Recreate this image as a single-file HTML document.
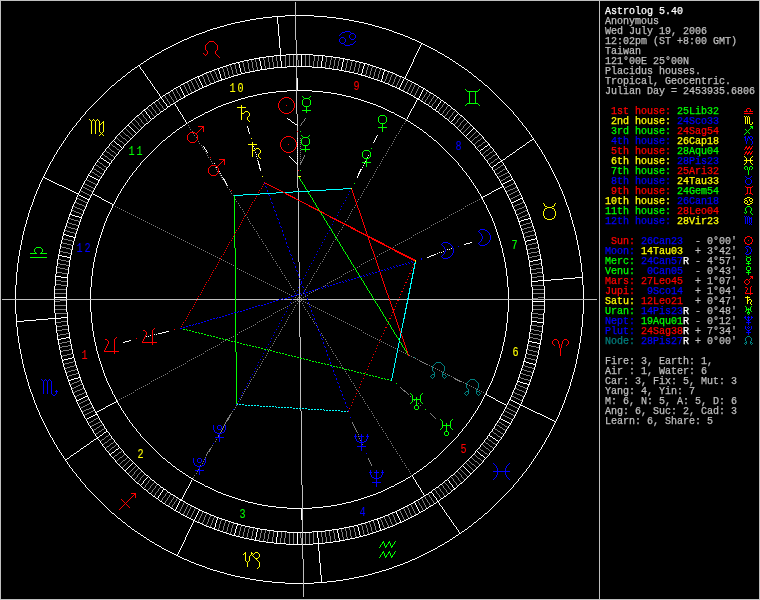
<!DOCTYPE html>
<html><head><meta charset="utf-8"><title>Astrolog 5.40 chart</title>
<style>
html,body{margin:0;padding:0;background:#000;overflow:hidden}
svg{display:block;will-change:transform}
.c-white{fill:#ffffff;stroke:#ffffff}
.c-lt{fill:#bfbfbf;stroke:#bfbfbf}
.c-gray{fill:#7f7f7f;stroke:#7f7f7f}
.c-red{fill:#ff0000;stroke:#ff0000}
.c-green{fill:#00ff00;stroke:#00ff00}
.c-yellow{fill:#ffff00;stroke:#ffff00}
.c-blue{fill:#0000ff;stroke:#0000ff}
.c-cyan{fill:#00ffff;stroke:#00ffff}
.c-dkcyan{fill:#007f7f;stroke:#007f7f}
.px path{fill:none;stroke-width:1;shape-rendering:crispEdges}
.sb text{font-family:"Liberation Mono",monospace;font-size:10px;white-space:pre;stroke-width:.25px}
.hn text{font-family:"Liberation Mono",monospace;font-size:13px;text-anchor:middle;letter-spacing:2.46px;stroke-width:.1px}
</style></head><body>
<svg width="760" height="600" viewBox="0 0 760 600">
<rect width="760" height="600" fill="#000"/>
<g class="px">
<path stroke="#ffffff" d="M285 15.5h10M296 15.5h18M272 16.5h13M314 16.5h13M263 17.5h9M327 17.5h9M256 18.5h7M336 18.5h7M250 19.5h6M343 19.5h6M245 20.5h5M349 20.5h5M240 21.5h5M354 21.5h5M235 22.5h5M359 22.5h5M231 23.5h4M364 23.5h4M227 24.5h4M368 24.5h4M224 25.5h3M372 25.5h3M220 26.5h4M375 26.5h4M217 27.5h3M379 27.5h3M213 28.5h4M382 28.5h4M210 29.5h3M386 29.5h3M207 30.5h3M389 30.5h3M205 31.5h2M392 31.5h2M202 32.5h3M394 32.5h3M199 33.5h3M397 33.5h3M196 34.5h3M400 34.5h3M194 35.5h2M403 35.5h2M191 36.5h3M405 36.5h3M189 37.5h2M408 37.5h2M187 38.5h2M410 38.5h2M184 39.5h3M412 39.5h3M182 40.5h2M415 40.5h2M180 41.5h2M417 41.5h2M178 42.5h2M419 42.5h2M176 43.5h2M421 43.5h2M174 44.5h2M423 44.5h2M172 45.5h2M425 45.5h2M170 46.5h2M427 46.5h2M168 47.5h2M429 47.5h2M166 48.5h2M431 48.5h2M164 49.5h2M433 49.5h2M162 50.5h2M435 50.5h2M159 52.5h2M438 52.5h2M157 53.5h2M440 53.5h2M155 54.5h2M286 54.5h10M297 54.5h16M442 54.5h2M274 55.5h12M313 55.5h12M152 56.5h2M266 56.5h8M325 56.5h8M445 56.5h2M150 57.5h2M259 57.5h7M333 57.5h7M447 57.5h2M254 58.5h6M340 58.5h5M147 59.5h2M249 59.5h5M345 59.5h5M450 59.5h2M244 60.5h5M350 60.5h5M144 61.5h2M240 61.5h4M355 61.5h4M453 61.5h2M236 62.5h4M359 62.5h4M141 63.5h2M232 63.5h4M363 63.5h4M456 63.5h2M229 64.5h3M367 64.5h3M138 65.5h2M226 65.5h3M370 65.5h3M459 65.5h2M223 66.5h3M287 66.5h9M297 66.5h15M373 66.5h3M135 67.5h2M220 67.5h3M274 67.5h13M312 67.5h13M376 67.5h3M462 67.5h2M217 68.5h3M267 68.5h7M325 68.5h7M379 68.5h3M132 69.5h2M214 69.5h3M260 69.5h7M332 69.5h7M382 69.5h3M465 69.5h2M212 70.5h2M255 70.5h5M339 70.5h5M384 70.5h3M209 71.5h3M250 71.5h5M344 71.5h5M387 71.5h3M128 72.5h2M206 72.5h3M245 72.5h5M349 72.5h5M390 72.5h3M469 72.5h2M204 73.5h2M241 73.5h4M354 73.5h4M393 73.5h2M202 74.5h2M238 74.5h3M358 74.5h4M395 74.5h2M200 75.5h2M234 75.5h4M361 75.5h4M397 75.5h2M123 76.5h2M197 76.5h3M231 76.5h3M365 76.5h3M399 76.5h3M474 76.5h2M195 77.5h2M228 77.5h3M368 77.5h3M402 77.5h2M193 78.5h2M225 78.5h3M371 78.5h3M404 78.5h2M191 79.5h2M221 79.5h4M374 79.5h3M406 79.5h2M118 80.5h2M189 80.5h2M219 80.5h3M377 80.5h3M408 80.5h2M479 80.5h2M187 81.5h2M216 81.5h3M380 81.5h3M410 81.5h2M185 82.5h2M214 82.5h2M383 82.5h2M412 82.5h2M183 83.5h2M211 83.5h3M385 83.5h3M414 83.5h2M181 84.5h2M209 84.5h2M388 84.5h2M416 84.5h2M112 85.5h2M207 85.5h2M390 85.5h2M485 85.5h2M178 86.5h2M204 86.5h3M392 86.5h3M419 86.5h2M176 87.5h2M202 87.5h2M395 87.5h2M421 87.5h2M174 88.5h2M200 88.5h2M397 88.5h3M423 88.5h2M198 89.5h2M399 89.5h2M171 90.5h2M196 90.5h2M287 90.5h9M297 90.5h15M401 90.5h2M426 90.5h2M194 91.5h2M276 91.5h11M312 91.5h11M403 91.5h2M168 92.5h2M192 92.5h2M268 92.5h8M323 92.5h8M405 92.5h2M429 92.5h2M166 93.5h2M190 93.5h2M262 93.5h6M331 93.5h6M407 93.5h2M431 93.5h2M188 94.5h2M257 94.5h5M337 94.5h5M409 94.5h2M163 95.5h2M186 95.5h2M253 95.5h4M342 95.5h4M411 95.5h2M434 95.5h2M184 96.5h2M248 96.5h5M346 96.5h5M160 97.5h2M183 97.5h2M245 97.5h3M351 97.5h3M414 97.5h2M437 97.5h2M181 98.5h2M241 98.5h4M354 98.5h4M416 98.5h3M179 99.5h2M238 99.5h3M358 99.5h3M417 99.5h3M156 100.5h2M235 100.5h3M361 100.5h3M441 100.5h2M176 101.5h2M232 101.5h3M364 101.5h3M421 101.5h2M153 102.5h2M229 102.5h3M367 102.5h3M444 102.5h2M173 103.5h2M226 103.5h3M370 103.5h3M424 103.5h2M171 104.5h2M223 104.5h3M373 104.5h3M426 104.5h2M149 105.5h2M221 105.5h2M376 105.5h2M448 105.5h2M167 106.5h3M218 106.5h3M378 106.5h3M429 106.5h2M216 107.5h2M381 107.5h2M214 108.5h2M383 108.5h2M144 109.5h2M164 109.5h2M212 109.5h2M385 109.5h2M433 109.5h3M453 109.5h2M143 110.5h2M210 110.5h2M387 110.5h2M161 111.5h2M208 111.5h2M389 111.5h2M436 111.5h2M205 112.5h3M391 112.5h3M157 114.5h2M202 114.5h2M395 114.5h2M440 114.5h2M137 115.5h2M200 115.5h2M397 115.5h2M460 115.5h2M198 116.5h2M399 116.5h2M196 117.5h2M401 117.5h2M152 118.5h2M194 118.5h2M403 118.5h2M445 118.5h2M288 119.5h2M191 120.5h2M406 120.5h2M189 121.5h2M408 121.5h2M292 122.5h2M146 123.5h2M411 123.5h2M451 123.5h2M295 124.5h2M127 125.5h2M183 125.5h2M414 125.5h2M180 127.5h2M417 127.5h2M473 128.5h2M177 129.5h2M420 129.5h2M173 132.5h2M424 132.5h2M168 136.5h2M429 136.5h2M532 139.5h2M163 140.5h2M434 140.5h2M530 140.5h2M527 142.5h2M117 144.5h2M488 144.5h2M523 145.5h2M485 146.5h2M520 147.5h2M481 149.5h2M517 149.5h2M513 152.5h2M510 154.5h2M507 156.5h2M101 158.5h2M503 159.5h2M104 160.5h2M501 160.5h2M500 161.5h2M107 162.5h2M498 162.5h2M109 163.5h2M258 164.5h2M494 165.5h2M491 167.5h2M259 168.5h2M360 169.5h2M359 171.5h2M358 173.5h2M88 175.5h2M90 176.5h2M43 177.5h2M92 177.5h2M45 178.5h2M94 178.5h2M47 179.5h2M96 179.5h2M223 179.5h2M511 179.5h2M49 180.5h2M98 180.5h2M509 180.5h2M51 181.5h2M507 181.5h2M53 182.5h2M505 182.5h2M55 183.5h2M503 183.5h2M57 184.5h2M501 184.5h2M59 185.5h3M62 186.5h2M502 186.5h2M64 187.5h2M500 187.5h2M66 188.5h2M498 188.5h2M68 189.5h2M496 189.5h2M70 190.5h2M494 190.5h2M72 191.5h2M492 191.5h2M74 192.5h2M76 193.5h3M489 193.5h2M93 194.5h2M487 194.5h2M79 195.5h2M95 195.5h2M485 195.5h2M81 196.5h2M97 196.5h2M483 196.5h2M83 197.5h2M99 197.5h2M481 197.5h2M85 198.5h2M520 198.5h3M87 199.5h3M102 199.5h2M518 199.5h2M104 200.5h2M516 200.5h2M106 201.5h2M514 201.5h2M108 202.5h2M511 202.5h3M110 203.5h2M112 204.5h2M69 214.5h3M72 215.5h3M75 216.5h4M79 217.5h3M528 218.5h3M524 219.5h4M521 220.5h3M518 221.5h3M63 234.5h3M66 235.5h3M69 236.5h4M73 237.5h3M535 238.5h2M531 239.5h4M527 240.5h4M525 241.5h2M470 242.5h2M466 243.5h4M464 244.5h2M434 254.5h2M58 255.5h4M431 255.5h3M62 256.5h5M429 256.5h2M67 257.5h4M427 257.5h2M538 259.5h4M533 260.5h5M529 261.5h4M55 276.5h6M61 277.5h7M575 277.5h8M563 278.5h12M551 279.5h12M538 280.5h13M531 281.5h7M54 297.5h13M532 301.5h13M61 317.5h7M48 318.5h13M36 319.5h12M24 320.5h12M16 321.5h8M531 321.5h6M537 322.5h7M166 331.5h3M162 332.5h4M158 333.5h4M66 337.5h4M61 338.5h5M57 339.5h4M129 340.5h2M125 341.5h4M528 341.5h4M123 342.5h2M532 342.5h5M537 343.5h4M72 357.5h2M68 358.5h4M64 359.5h4M62 360.5h2M523 361.5h3M526 362.5h3M529 363.5h4M533 364.5h3M78 377.5h3M74 378.5h4M71 379.5h3M68 380.5h3M517 381.5h3M520 382.5h3M523 383.5h4M527 384.5h3M485 394.5h2M487 395.5h2M85 396.5h3M489 396.5h2M83 397.5h2M491 397.5h2M81 398.5h2M493 398.5h2M79 399.5h2M509 399.5h2M76 400.5h3M496 400.5h2M511 400.5h2M116 401.5h2M498 401.5h2M513 401.5h2M114 402.5h2M500 402.5h2M515 402.5h2M112 403.5h2M502 403.5h2M517 403.5h2M110 404.5h2M504 404.5h2M519 404.5h2M108 405.5h2M520 405.5h3M106 406.5h2M523 406.5h2M525 407.5h2M103 408.5h2M527 408.5h2M101 409.5h2M529 409.5h2M99 410.5h2M531 410.5h2M97 411.5h2M533 411.5h2M95 412.5h2M535 412.5h2M537 413.5h3M95 414.5h3M540 414.5h2M93 415.5h2M542 415.5h2M91 416.5h2M544 416.5h2M89 417.5h2M546 417.5h2M87 418.5h2M499 418.5h2M548 418.5h2M501 419.5h2M550 419.5h2M503 420.5h2M552 420.5h2M505 421.5h2M554 421.5h2M507 422.5h2M509 423.5h2M106 431.5h2M104 432.5h2M100 435.5h2M488 435.5h2M490 436.5h2M97 437.5h2M96 438.5h2M493 438.5h2M94 439.5h2M496 440.5h2M91 441.5h2M87 444.5h2M84 446.5h2M81 448.5h2M116 449.5h2M77 451.5h2M112 452.5h2M74 453.5h2M109 454.5h2M71 455.5h2M481 455.5h2M67 458.5h2M163 458.5h2M434 458.5h2M65 459.5h2M168 462.5h2M429 462.5h2M173 466.5h2M424 466.5h2M177 469.5h2M420 469.5h2M124 470.5h2M180 471.5h2M417 471.5h2M183 473.5h2M414 473.5h2M470 473.5h2M146 475.5h2M186 475.5h2M451 475.5h2M189 477.5h2M408 477.5h2M191 478.5h2M406 478.5h2M152 480.5h2M194 480.5h2M403 480.5h2M445 480.5h2M196 481.5h2M401 481.5h2M198 482.5h2M399 482.5h2M137 483.5h2M200 483.5h2M397 483.5h2M460 483.5h2M157 484.5h2M202 484.5h2M395 484.5h2M440 484.5h2M205 486.5h3M391 486.5h3M161 487.5h2M208 487.5h2M389 487.5h2M436 487.5h2M210 488.5h2M387 488.5h2M454 488.5h2M144 489.5h2M163 489.5h3M212 489.5h2M385 489.5h2M433 489.5h2M453 489.5h2M214 490.5h2M383 490.5h2M216 491.5h2M381 491.5h2M168 492.5h2M218 492.5h3M378 492.5h3M429 492.5h3M149 493.5h2M221 493.5h2M376 493.5h2M448 493.5h2M171 494.5h2M223 494.5h3M373 494.5h3M426 494.5h2M173 495.5h2M226 495.5h3M370 495.5h3M424 495.5h2M153 496.5h2M229 496.5h3M367 496.5h3M444 496.5h2M176 497.5h2M232 497.5h3M364 497.5h3M421 497.5h2M156 498.5h2M235 498.5h3M361 498.5h3M441 498.5h2M179 499.5h3M238 499.5h3M358 499.5h3M418 499.5h2M180 500.5h3M241 500.5h4M354 500.5h4M416 500.5h2M160 501.5h2M183 501.5h2M245 501.5h3M351 501.5h3M414 501.5h2M437 501.5h2M248 502.5h5M346 502.5h5M413 502.5h2M163 503.5h2M186 503.5h2M253 503.5h4M342 503.5h4M411 503.5h2M434 503.5h2M188 504.5h2M257 504.5h5M337 504.5h5M409 504.5h2M166 505.5h2M190 505.5h2M262 505.5h6M331 505.5h6M407 505.5h2M431 505.5h2M168 506.5h2M192 506.5h2M268 506.5h8M323 506.5h8M405 506.5h2M429 506.5h2M194 507.5h2M276 507.5h11M312 507.5h11M403 507.5h2M171 508.5h2M196 508.5h2M287 508.5h15M303 508.5h9M401 508.5h2M426 508.5h2M198 509.5h2M399 509.5h2M174 510.5h2M199 510.5h3M397 510.5h2M423 510.5h2M176 511.5h2M202 511.5h2M395 511.5h2M421 511.5h2M178 512.5h2M204 512.5h3M392 512.5h3M419 512.5h2M112 513.5h2M207 513.5h2M390 513.5h2M485 513.5h2M181 514.5h2M209 514.5h2M388 514.5h2M416 514.5h2M183 515.5h2M211 515.5h3M385 515.5h3M414 515.5h2M185 516.5h2M214 516.5h2M383 516.5h2M412 516.5h2M187 517.5h2M216 517.5h3M380 517.5h3M410 517.5h2M118 518.5h2M189 518.5h2M219 518.5h3M377 518.5h3M408 518.5h2M479 518.5h2M191 519.5h2M222 519.5h3M374 519.5h4M406 519.5h2M193 520.5h2M225 520.5h3M371 520.5h3M404 520.5h2M195 521.5h2M228 521.5h3M368 521.5h3M402 521.5h2M123 522.5h2M197 522.5h3M231 522.5h3M365 522.5h3M399 522.5h3M474 522.5h2M200 523.5h2M234 523.5h4M361 523.5h4M397 523.5h2M202 524.5h2M237 524.5h4M358 524.5h3M395 524.5h2M204 525.5h2M241 525.5h4M354 525.5h4M393 525.5h2M128 526.5h2M206 526.5h3M245 526.5h5M349 526.5h5M390 526.5h3M469 526.5h2M209 527.5h3M250 527.5h5M344 527.5h5M387 527.5h3M212 528.5h3M255 528.5h5M339 528.5h5M385 528.5h2M132 529.5h2M214 529.5h3M260 529.5h7M332 529.5h7M382 529.5h3M465 529.5h2M217 530.5h3M267 530.5h7M325 530.5h7M379 530.5h3M135 531.5h2M220 531.5h3M274 531.5h13M312 531.5h13M376 531.5h3M462 531.5h2M223 532.5h3M287 532.5h15M303 532.5h9M373 532.5h3M138 533.5h2M226 533.5h3M370 533.5h3M459 533.5h2M229 534.5h3M367 534.5h3M141 535.5h2M232 535.5h4M363 535.5h4M456 535.5h2M236 536.5h4M359 536.5h4M144 537.5h2M240 537.5h4M355 537.5h4M453 537.5h2M244 538.5h5M350 538.5h5M147 539.5h2M249 539.5h5M345 539.5h5M450 539.5h2M254 540.5h5M339 540.5h6M150 541.5h2M259 541.5h7M333 541.5h7M447 541.5h2M152 542.5h2M266 542.5h8M325 542.5h8M445 542.5h2M274 543.5h12M313 543.5h12M155 544.5h2M286 544.5h16M303 544.5h10M442 544.5h2M157 545.5h2M440 545.5h2M159 546.5h2M438 546.5h2M162 548.5h2M435 548.5h2M164 549.5h2M433 549.5h2M166 550.5h2M431 550.5h2M168 551.5h2M429 551.5h2M170 552.5h2M427 552.5h2M172 553.5h2M425 553.5h2M174 554.5h2M423 554.5h2M176 555.5h2M421 555.5h2M178 556.5h2M419 556.5h2M180 557.5h2M417 557.5h2M182 558.5h2M415 558.5h2M184 559.5h3M412 559.5h3M187 560.5h2M410 560.5h2M189 561.5h2M408 561.5h2M191 562.5h3M405 562.5h3M194 563.5h2M403 563.5h2M196 564.5h3M400 564.5h3M199 565.5h3M397 565.5h3M202 566.5h3M394 566.5h3M205 567.5h2M392 567.5h2M207 568.5h3M389 568.5h3M210 569.5h3M386 569.5h3M213 570.5h4M382 570.5h4M217 571.5h3M379 571.5h3M220 572.5h4M375 572.5h4M224 573.5h3M372 573.5h3M227 574.5h4M368 574.5h4M231 575.5h4M364 575.5h4M235 576.5h5M359 576.5h5M240 577.5h5M354 577.5h5M245 578.5h5M349 578.5h5M250 579.5h6M343 579.5h6M256 580.5h7M336 580.5h7M263 581.5h9M327 581.5h9M272 582.5h13M314 582.5h13M285 583.5h18M304 583.5h10M15.5 285v14M15.5 300v14M16.5 272v13M16.5 314v7M16.5 322v5M17.5 263v9M17.5 327v9M18.5 256v7M18.5 336v7M19.5 250v6M19.5 343v6M20.5 245v5M20.5 349v5M21.5 240v5M21.5 354v5M22.5 235v5M22.5 359v5M23.5 231v4M23.5 364v4M24.5 227v4M24.5 368v4M25.5 224v3M25.5 372v3M26.5 220v4M26.5 375v4M27.5 217v3M27.5 379v3M28.5 213v4M28.5 382v4M29.5 210v3M29.5 386v3M30.5 207v3M30.5 389v3M31.5 205v2M31.5 392v2M32.5 202v3M32.5 394v3M33.5 199v3M33.5 397v3M34.5 196v3M34.5 400v3M35.5 194v2M35.5 403v2M36.5 191v3M36.5 405v3M37.5 189v2M37.5 408v2M38.5 187v2M38.5 410v2M39.5 184v3M39.5 412v3M40.5 182v2M40.5 415v2M41.5 180v2M41.5 417v2M42.5 178v2M42.5 419v2M43.5 176v1M43.5 421v2M44.5 174v2M44.5 423v2M45.5 172v2M45.5 425v2M46.5 170v2M46.5 427v2M47.5 168v2M47.5 429v2M48.5 166v2M48.5 431v2M49.5 164v2M49.5 433v2M50.5 162v2M50.5 435v2M51.5 161v1M51.5 437v1M52.5 159v2M52.5 438v2M53.5 157v2M53.5 440v2M54.5 155v2M54.5 286v11M54.5 298v1M54.5 300v13M54.5 442v2M55.5 154v1M55.5 274v2M55.5 277v9M55.5 313v5M55.5 319v6M55.5 444v1M56.5 152v2M56.5 266v8M56.5 325v8M56.5 445v2M57.5 150v2M57.5 259v7M57.5 333v6M57.5 447v2M58.5 149v1M58.5 254v1M58.5 256v3M58.5 340v5M58.5 449v1M59.5 147v2M59.5 249v5M59.5 345v5M59.5 450v2M60.5 146v1M60.5 244v5M60.5 350v5M60.5 452v1M61.5 144v2M61.5 240v4M61.5 355v4M61.5 453v2M62.5 143v1M62.5 236v4M62.5 359v1M62.5 361v2M62.5 455v1M63.5 141v2M63.5 232v2M63.5 235v1M63.5 363v4M63.5 456v2M64.5 140v1M64.5 229v3M64.5 367v3M64.5 458v1M65.5 138v2M65.5 226v3M65.5 370v3M65.5 460v1M66.5 137v1M66.5 223v3M66.5 287v10M66.5 298v1M66.5 300v12M66.5 373v3M66.5 461v1M67.5 135v2M67.5 220v3M67.5 274v3M67.5 278v9M67.5 312v5M67.5 318v7M67.5 376v3M67.5 462v2M68.5 134v1M68.5 217v3M68.5 267v7M68.5 325v7M68.5 379v1M68.5 381v1M68.5 464v1M69.5 132v2M69.5 215v2M69.5 260v7M69.5 332v5M69.5 338v1M69.5 382v3M69.5 457v1M69.5 465v2M70.5 131v1M70.5 212v2M70.5 255v2M70.5 258v2M70.5 339v5M70.5 385v2M70.5 456v1M70.5 467v1M71.5 130v1M71.5 209v3M71.5 250v5M71.5 344v5M71.5 387v3M71.5 468v1M72.5 128v2M72.5 206v3M72.5 245v5M72.5 349v5M72.5 390v3M72.5 469v2M73.5 127v1M73.5 204v2M73.5 241v4M73.5 354v3M73.5 393v2M73.5 454v1M73.5 471v1M74.5 126v1M74.5 202v2M74.5 238v3M74.5 358v3M74.5 395v2M74.5 472v1M75.5 125v1M75.5 200v2M75.5 234v3M75.5 361v4M75.5 397v2M75.5 473v1M76.5 123v2M76.5 197v3M76.5 231v3M76.5 365v3M76.5 399v1M76.5 401v1M76.5 452v1M76.5 474v2M77.5 122v1M77.5 195v2M77.5 228v3M77.5 368v3M77.5 402v2M77.5 476v1M78.5 121v1M78.5 194v1M78.5 225v3M78.5 371v3M78.5 404v2M78.5 477v1M79.5 120v1M79.5 191v2M79.5 222v3M79.5 374v3M79.5 406v2M79.5 450v1M79.5 478v1M80.5 118v2M80.5 189v2M80.5 219v3M80.5 378v2M80.5 408v2M80.5 449v1M80.5 479v2M81.5 117v1M81.5 187v2M81.5 216v1M81.5 218v1M81.5 380v3M81.5 410v2M81.5 481v1M82.5 116v1M82.5 185v2M82.5 214v2M82.5 383v2M82.5 412v2M82.5 482v1M83.5 115v1M83.5 183v2M83.5 211v3M83.5 385v3M83.5 414v2M83.5 447v1M83.5 483v1M84.5 114v1M84.5 181v2M84.5 209v2M84.5 388v2M84.5 416v2M84.5 484v1M85.5 112v2M85.5 180v1M85.5 207v2M85.5 390v2M85.5 418v1M85.5 485v2M86.5 111v1M86.5 178v2M86.5 204v3M86.5 392v3M86.5 419v2M86.5 445v1M86.5 487v1M87.5 110v1M87.5 176v2M87.5 202v2M87.5 395v1M87.5 421v2M87.5 488v1M88.5 109v1M88.5 174v1M88.5 200v2M88.5 397v2M88.5 423v2M88.5 489v1M89.5 108v1M89.5 173v1M89.5 198v1M89.5 399v2M89.5 425v1M89.5 443v1M89.5 490v1M90.5 107v1M90.5 171v2M90.5 196v2M90.5 287v12M90.5 300v12M90.5 401v2M90.5 426v2M90.5 442v1M90.5 491v1M91.5 106v1M91.5 170v1M91.5 194v2M91.5 276v11M91.5 312v11M91.5 403v2M91.5 428v1M91.5 492v1M92.5 105v1M92.5 168v2M92.5 192v2M92.5 268v8M92.5 323v8M92.5 405v2M92.5 429v2M92.5 493v1M93.5 104v1M93.5 166v2M93.5 190v2M93.5 262v6M93.5 331v6M93.5 407v2M93.5 431v2M93.5 440v1M93.5 494v1M94.5 103v1M94.5 165v1M94.5 188v2M94.5 257v5M94.5 337v5M94.5 409v2M94.5 433v1M94.5 495v1M95.5 102v1M95.5 163v2M95.5 186v2M95.5 253v4M95.5 342v4M95.5 411v1M95.5 434v2M95.5 496v1M96.5 101v1M96.5 162v1M96.5 185v1M96.5 248v5M96.5 346v5M96.5 413v1M96.5 436v1M96.5 497v1M97.5 100v1M97.5 160v2M97.5 183v2M97.5 245v3M97.5 351v3M97.5 415v1M97.5 498v1M98.5 99v1M98.5 159v1M98.5 181v2M98.5 241v4M98.5 354v4M98.5 416v2M98.5 439v1M98.5 499v1M99.5 98v1M99.5 158v1M99.5 179v1M99.5 238v3M99.5 358v3M99.5 418v2M99.5 436v1M99.5 440v1M99.5 500v1M100.5 97v1M100.5 156v2M100.5 178v1M100.5 235v3M100.5 361v3M100.5 420v1M100.5 441v2M100.5 501v1M101.5 96v1M101.5 155v1M101.5 176v2M101.5 198v1M101.5 232v3M101.5 364v3M101.5 421v2M101.5 443v1M101.5 502v1M102.5 95v1M102.5 153v2M102.5 175v1M102.5 229v3M102.5 367v3M102.5 423v1M102.5 434v1M102.5 444v2M102.5 503v1M103.5 94v1M103.5 152v1M103.5 159v1M103.5 173v2M103.5 226v3M103.5 370v3M103.5 424v2M103.5 433v1M103.5 446v1M103.5 504v1M104.5 93v1M104.5 151v1M104.5 171v2M104.5 223v3M104.5 373v3M104.5 426v2M104.5 447v1M104.5 505v1M105.5 92v1M105.5 149v2M105.5 170v1M105.5 221v2M105.5 376v2M105.5 407v1M105.5 428v1M105.5 448v2M105.5 506v1M106.5 91v1M106.5 148v1M106.5 161v1M106.5 168v2M106.5 218v3M106.5 378v3M106.5 429v2M106.5 450v1M106.5 507v1M107.5 90v1M107.5 147v1M107.5 167v1M107.5 216v2M107.5 381v2M107.5 451v1M107.5 508v1M108.5 89v1M108.5 146v1M108.5 166v1M108.5 214v2M108.5 383v2M108.5 432v1M108.5 452v1M108.5 509v1M109.5 88v1M109.5 144v2M109.5 164v2M109.5 212v2M109.5 385v2M109.5 433v2M109.5 453v1M109.5 510v1M110.5 87v1M110.5 143v1M110.5 210v2M110.5 387v2M110.5 435v1M110.5 455v1M110.5 511v1M111.5 86v1M111.5 142v1M111.5 161v2M111.5 208v2M111.5 389v2M111.5 436v2M111.5 453v1M111.5 456v1M111.5 512v1M112.5 141v1M112.5 160v1M112.5 205v3M112.5 391v3M112.5 438v1M112.5 457v1M113.5 140v1M113.5 159v1M113.5 394v1M113.5 439v1M113.5 458v1M114.5 84v1M114.5 139v1M114.5 141v1M114.5 157v2M114.5 202v2M114.5 395v2M114.5 440v2M114.5 451v1M114.5 459v1M114.5 514v1M115.5 83v1M115.5 137v2M115.5 142v1M115.5 156v1M115.5 200v2M115.5 397v2M115.5 442v1M115.5 450v1M115.5 460v2M115.5 515v1M116.5 82v1M116.5 136v1M116.5 143v1M116.5 155v1M116.5 198v2M116.5 399v2M116.5 443v1M116.5 462v1M116.5 516v1M117.5 81v1M117.5 135v1M117.5 154v1M117.5 196v2M117.5 402v1M117.5 444v1M117.5 463v1M117.5 517v1M118.5 134v1M118.5 152v2M118.5 194v2M118.5 403v2M118.5 445v2M118.5 448v1M118.5 464v1M119.5 133v1M119.5 145v1M119.5 151v1M119.5 193v1M119.5 405v1M119.5 447v1M119.5 465v1M120.5 79v1M120.5 132v1M120.5 146v1M120.5 150v1M120.5 191v2M120.5 406v2M120.5 448v1M120.5 466v1M120.5 519v1M121.5 78v1M121.5 131v1M121.5 147v1M121.5 149v1M121.5 189v2M121.5 408v2M121.5 449v1M121.5 467v1M121.5 520v1M122.5 77v1M122.5 130v1M122.5 148v1M122.5 188v1M122.5 410v1M122.5 450v1M122.5 468v1M122.5 521v1M123.5 129v1M123.5 146v2M123.5 186v2M123.5 411v2M123.5 451v2M123.5 469v1M124.5 128v1M124.5 145v1M124.5 185v1M124.5 413v1M124.5 453v1M125.5 75v1M125.5 127v1M125.5 144v1M125.5 183v2M125.5 414v2M125.5 454v1M125.5 471v1M125.5 523v1M126.5 74v1M126.5 126v1M126.5 143v1M126.5 182v1M126.5 416v1M126.5 455v1M126.5 469v1M126.5 472v1M126.5 524v1M127.5 73v1M127.5 142v1M127.5 180v2M127.5 417v2M127.5 456v1M127.5 468v1M127.5 473v1M127.5 525v1M128.5 124v1M128.5 141v1M128.5 179v1M128.5 419v1M128.5 457v1M128.5 467v1M128.5 474v1M129.5 123v1M129.5 126v1M129.5 140v1M129.5 177v2M129.5 420v2M129.5 458v1M129.5 466v1M129.5 475v1M130.5 71v1M130.5 122v1M130.5 127v1M130.5 139v1M130.5 176v1M130.5 422v1M130.5 459v1M130.5 465v1M130.5 476v1M130.5 527v1M131.5 70v1M131.5 121v1M131.5 128v1M131.5 138v1M131.5 175v1M131.5 423v1M131.5 460v1M131.5 464v1M131.5 477v1M131.5 528v1M132.5 120v1M132.5 129v1M132.5 137v1M132.5 173v2M132.5 424v2M132.5 461v1M132.5 463v1M132.5 478v1M133.5 119v1M133.5 130v1M133.5 136v1M133.5 172v1M133.5 426v1M133.5 462v1M133.5 479v1M134.5 68v1M134.5 118v1M134.5 131v1M134.5 135v1M134.5 171v1M134.5 427v1M134.5 463v1M134.5 480v1M134.5 530v1M135.5 117v1M135.5 132v1M135.5 134v1M135.5 170v1M135.5 428v1M135.5 464v1M135.5 481v1M136.5 116v1M136.5 133v1M136.5 168v2M136.5 429v2M136.5 465v1M136.5 482v1M137.5 66v1M137.5 132v1M137.5 167v1M137.5 431v1M137.5 466v1M137.5 532v1M138.5 131v1M138.5 166v1M138.5 432v1M138.5 467v1M139.5 66v1M139.5 114v1M139.5 130v1M139.5 165v1M139.5 433v1M139.5 468v1M139.5 484v1M140.5 64v1M140.5 67v2M140.5 113v1M140.5 129v1M140.5 163v2M140.5 434v2M140.5 469v1M140.5 485v1M140.5 534v1M141.5 69v1M141.5 112v1M141.5 128v1M141.5 162v1M141.5 436v1M141.5 470v1M141.5 484v1M141.5 486v1M142.5 70v1M142.5 111v1M142.5 127v1M142.5 161v1M142.5 437v1M142.5 471v1M142.5 483v1M142.5 487v1M143.5 62v1M143.5 71v2M143.5 126v1M143.5 160v1M143.5 438v1M143.5 472v1M143.5 481v2M143.5 488v1M143.5 536v1M144.5 73v1M144.5 125v1M144.5 159v1M144.5 439v1M144.5 473v1M144.5 480v1M145.5 74v2M145.5 111v1M145.5 124v1M145.5 158v1M145.5 440v1M145.5 474v1M145.5 479v1M146.5 60v1M146.5 76v1M146.5 108v1M146.5 112v2M146.5 157v1M146.5 336v1M146.5 441v1M146.5 478v1M146.5 490v1M146.5 538v1M147.5 77v2M147.5 107v1M147.5 114v1M147.5 156v1M147.5 442v1M147.5 477v1M147.5 491v1M148.5 79v1M148.5 106v1M148.5 115v1M148.5 122v1M148.5 155v1M148.5 336v1M148.5 443v1M148.5 476v1M148.5 492v1M149.5 58v1M149.5 80v1M149.5 116v2M149.5 121v1M149.5 154v1M149.5 444v1M149.5 477v1M149.5 540v1M150.5 81v2M150.5 118v1M150.5 120v1M150.5 153v1M150.5 335v1M150.5 445v1M150.5 478v1M151.5 83v1M151.5 104v1M151.5 119v1M151.5 152v1M151.5 446v1M151.5 479v1M151.5 494v1M152.5 84v2M152.5 103v1M152.5 151v1M152.5 447v1M152.5 495v1M153.5 86v1M153.5 150v1M153.5 448v1M154.5 55v1M154.5 87v2M154.5 117v1M154.5 149v1M154.5 334v1M154.5 449v1M154.5 481v1M154.5 543v1M155.5 89v1M155.5 101v1M155.5 116v1M155.5 148v1M155.5 450v1M155.5 482v1M155.5 497v1M156.5 90v1M156.5 115v1M156.5 147v1M156.5 334v1M156.5 451v1M156.5 483v1M157.5 91v2M157.5 146v1M157.5 452v1M158.5 93v1M158.5 99v1M158.5 145v1M158.5 453v1M158.5 496v2M158.5 499v1M159.5 94v2M159.5 98v1M159.5 113v1M159.5 144v1M159.5 454v1M159.5 485v1M159.5 495v1M159.5 500v1M160.5 96v1M160.5 112v1M160.5 143v1M160.5 455v1M160.5 486v1M160.5 493v2M161.5 51v1M161.5 98v1M161.5 142v1M161.5 456v1M161.5 492v1M161.5 547v1M162.5 96v1M162.5 99v1M162.5 141v1M162.5 457v1M162.5 490v2M162.5 502v1M163.5 100v2M163.5 110v1M163.5 488v1M164.5 102v1M165.5 94v1M165.5 103v1M165.5 139v1M165.5 459v1M165.5 504v1M166.5 104v2M166.5 108v1M166.5 138v1M166.5 460v1M166.5 490v1M167.5 107v1M167.5 137v1M167.5 461v1M167.5 491v1M170.5 91v1M170.5 105v1M170.5 135v1M170.5 463v1M170.5 493v1M170.5 507v1M171.5 134v1M171.5 464v1M172.5 133v1M172.5 465v1M173.5 89v1M173.5 509v1M175.5 102v1M175.5 104v2M175.5 131v1M175.5 467v1M175.5 496v1M175.5 509v1M176.5 106v1M176.5 130v1M176.5 468v1M176.5 507v2M177.5 107v2M177.5 505v2M177.5 554v1M178.5 100v1M178.5 109v2M178.5 498v1M178.5 503v2M178.5 552v2M179.5 111v1M179.5 128v1M179.5 470v1M179.5 501v2M179.5 550v2M180.5 85v1M180.5 87v2M180.5 112v2M180.5 513v1M180.5 548v2M181.5 89v2M181.5 114v1M181.5 546v2M182.5 91v2M182.5 115v2M182.5 126v1M182.5 472v1M182.5 497v2M182.5 544v2M183.5 93v2M183.5 117v2M183.5 495v2M183.5 542v2M184.5 95v1M184.5 119v1M184.5 493v2M184.5 540v2M185.5 120v2M185.5 124v1M185.5 474v1M185.5 491v2M185.5 502v1M185.5 537v3M186.5 122v2M186.5 489v2M186.5 535v2M187.5 488v1M187.5 533v2M188.5 122v1M188.5 476v1M188.5 486v2M188.5 531v2M189.5 484v2M189.5 529v2M190.5 482v2M190.5 527v2M191.5 480v2M191.5 525v2M192.5 523v2M193.5 119v1M193.5 479v1M193.5 521v2M194.5 519v1M195.5 517v2M196.5 515v2M197.5 513v2M198.5 77v2M198.5 511v2M199.5 79v2M200.5 81v2M201.5 83v2M202.5 85v2M203.5 146v1M204.5 113v1M204.5 147v2M204.5 485v1M205.5 149v1M206.5 150v2M207.5 152v1M214.5 163v1M214.5 527v1M215.5 523v4M216.5 167v1M216.5 520v3M217.5 518v2M218.5 69v2M219.5 71v3M219.5 171v1M220.5 74v4M220.5 173v1M221.5 78v1M221.5 175v1M222.5 177v1M223.5 178v1M224.5 180v1M225.5 181v2M226.5 183v2M227.5 185v1M234.5 533v2M235.5 529v4M236.5 526v3M237.5 525v1M238.5 63v1M239.5 64v4M240.5 68v4M241.5 72v1M247.5 126v2M248.5 128v4M249.5 132v2M253.5 146v1M254.5 148v1M255.5 152v1M255.5 537v3M256.5 154v1M256.5 156v1M256.5 532v5M257.5 158v1M257.5 160v1M257.5 529v3M258.5 161v3M259.5 59v2M259.5 165v3M260.5 61v5M260.5 169v2M261.5 66v3M276.5 537v6M277.5 17v7M277.5 532v5M278.5 24v12M279.5 36v12M280.5 48v7M280.5 56v5M281.5 61v6M287.5 118v1M289.5 156v1M290.5 120v1M290.5 157v1M291.5 121v1M291.5 158v1M292.5 159v1M293.5 160v1M294.5 123v1M294.5 161v1M295.5 162v1M296.5 163v1M297.5 78v12M297.5 125v1M297.5 138v1M297.5 140v1M297.5 142v1M297.5 144v1M297.5 146v1M297.5 148v1M297.5 150v1M297.5 152v1M297.5 154v1M297.5 156v1M297.5 158v1M297.5 160v1M297.5 162v1M297.5 164v1M297.5 533v11M301.5 55v11M301.5 509v11M317.5 532v6M318.5 538v5M318.5 544v7M319.5 551v12M320.5 563v12M321.5 61v6M321.5 575v7M322.5 56v5M337.5 530v3M338.5 533v5M339.5 538v2M341.5 67v3M342.5 62v5M343.5 59v3M357.5 176v2M357.5 526v1M358.5 174v2M358.5 527v4M359.5 172v1M359.5 531v4M360.5 170v1M360.5 535v1M361.5 73v1M362.5 69v4M362.5 167v1M363.5 66v3M363.5 165v1M364.5 64v2M364.5 163v1M365.5 161v1M367.5 157v1M368.5 155v1M373.5 142v1M374.5 140v2M375.5 138v2M376.5 136v2M377.5 135v1M377.5 520v1M378.5 521v3M379.5 524v4M380.5 528v2M381.5 79v2M382.5 75v4M383.5 72v3M384.5 71v1M394.5 113v1M394.5 485v1M396.5 512v2M397.5 514v2M398.5 516v2M399.5 87v1M399.5 518v2M400.5 85v2M400.5 520v2M401.5 83v2M402.5 81v2M403.5 79v2M405.5 76v2M405.5 119v1M405.5 479v1M406.5 74v2M407.5 72v2M407.5 117v2M408.5 70v2M408.5 115v2M409.5 68v2M409.5 113v2M410.5 66v2M410.5 111v2M410.5 122v1M410.5 476v1M411.5 64v2M411.5 109v2M412.5 62v2M412.5 108v1M412.5 475v2M413.5 59v3M413.5 96v1M413.5 106v2M413.5 124v1M413.5 474v1M413.5 477v2M414.5 57v2M414.5 104v2M414.5 479v1M415.5 55v2M415.5 102v2M415.5 480v2M415.5 503v2M416.5 53v2M416.5 100v2M416.5 126v1M416.5 472v1M416.5 482v2M416.5 505v2M417.5 51v2M417.5 484v1M417.5 507v2M418.5 49v2M418.5 85v1M418.5 485v2M418.5 509v2M418.5 513v1M419.5 47v2M419.5 96v2M419.5 128v1M419.5 470v1M419.5 487v1M419.5 511v1M420.5 45v2M420.5 94v2M420.5 100v1M420.5 488v2M420.5 498v1M421.5 44v1M421.5 92v2M421.5 490v2M422.5 90v2M422.5 130v1M422.5 468v1M422.5 492v1M423.5 89v1M423.5 102v1M423.5 131v1M423.5 467v1M423.5 493v2M423.5 496v1M425.5 89v1M425.5 509v1M426.5 133v1M426.5 465v1M427.5 134v1M427.5 464v1M428.5 91v1M428.5 105v1M428.5 135v1M428.5 463v1M428.5 493v1M428.5 507v1M431.5 107v1M431.5 137v1M431.5 461v1M431.5 491v1M432.5 108v1M432.5 138v1M432.5 460v1M432.5 490v1M432.5 493v1M433.5 94v1M433.5 139v1M433.5 459v1M433.5 494v2M433.5 504v1M434.5 496v1M435.5 110v1M435.5 488v1M435.5 497v1M436.5 96v1M436.5 107v2M436.5 141v1M436.5 457v1M436.5 498v2M436.5 502v1M437.5 51v1M437.5 106v1M437.5 142v1M437.5 253v1M437.5 456v1M437.5 500v1M437.5 547v1M438.5 104v2M438.5 112v1M438.5 143v1M438.5 455v1M438.5 486v1M438.5 502v1M439.5 98v1M439.5 103v1M439.5 113v1M439.5 144v1M439.5 252v1M439.5 454v1M439.5 485v1M439.5 500v1M439.5 503v2M440.5 99v1M440.5 101v2M440.5 145v1M440.5 453v1M440.5 499v1M440.5 505v1M441.5 146v1M441.5 252v1M441.5 452v1M441.5 506v1M442.5 115v1M442.5 147v1M442.5 451v1M442.5 483v1M442.5 507v2M443.5 101v1M443.5 116v1M443.5 148v1M443.5 251v1M443.5 450v1M443.5 482v1M443.5 497v1M443.5 509v1M444.5 55v1M444.5 117v1M444.5 149v1M444.5 449v1M444.5 481v1M444.5 510v2M444.5 543v1M445.5 150v1M445.5 448v1M445.5 512v1M446.5 103v1M446.5 151v1M446.5 447v1M446.5 495v1M446.5 513v2M447.5 104v1M447.5 119v1M447.5 152v1M447.5 249v1M447.5 446v1M447.5 479v1M447.5 494v1M447.5 515v1M448.5 120v1M448.5 153v1M448.5 445v1M448.5 478v1M448.5 480v1M448.5 516v1M449.5 58v1M449.5 121v1M449.5 154v1M449.5 249v1M449.5 444v1M449.5 477v1M449.5 481v2M449.5 517v2M449.5 540v1M450.5 106v1M450.5 122v1M450.5 155v1M450.5 443v1M450.5 476v1M450.5 483v1M450.5 492v1M450.5 519v1M451.5 107v1M451.5 121v1M451.5 156v1M451.5 248v1M451.5 442v1M451.5 484v1M451.5 491v1M451.5 520v2M452.5 60v1M452.5 108v1M452.5 120v1M452.5 157v1M452.5 441v1M452.5 485v2M452.5 490v1M452.5 522v1M452.5 538v1M453.5 119v1M453.5 124v1M453.5 158v1M453.5 440v1M453.5 474v1M453.5 487v1M453.5 523v2M454.5 117v2M454.5 125v1M454.5 159v1M454.5 439v1M454.5 473v1M454.5 525v1M455.5 62v1M455.5 110v1M455.5 116v1M455.5 126v1M455.5 160v1M455.5 438v1M455.5 472v1M455.5 526v1M455.5 536v1M456.5 111v1M456.5 115v1M456.5 127v1M456.5 161v1M456.5 437v1M456.5 471v1M456.5 487v1M456.5 527v2M457.5 112v1M457.5 114v1M457.5 128v1M457.5 162v1M457.5 436v1M457.5 470v1M457.5 486v1M457.5 529v1M458.5 64v1M458.5 113v1M458.5 129v1M458.5 163v2M458.5 434v2M458.5 469v1M458.5 485v1M458.5 530v2M458.5 534v1M459.5 114v1M459.5 130v1M459.5 165v1M459.5 433v1M459.5 468v1M459.5 484v1M459.5 532v1M460.5 131v1M460.5 166v1M460.5 432v1M460.5 467v1M461.5 66v1M461.5 132v1M461.5 167v1M461.5 431v1M461.5 466v1M461.5 532v1M462.5 116v1M462.5 133v1M462.5 168v2M462.5 429v2M462.5 465v1M462.5 482v1M463.5 117v1M463.5 134v1M463.5 170v1M463.5 428v1M463.5 464v1M463.5 466v1M463.5 481v1M464.5 68v1M464.5 118v1M464.5 135v1M464.5 171v1M464.5 427v1M464.5 463v1M464.5 467v1M464.5 480v1M464.5 530v1M465.5 119v1M465.5 136v1M465.5 172v1M465.5 426v1M465.5 462v1M465.5 468v1M465.5 479v1M466.5 120v1M466.5 135v1M466.5 137v1M466.5 173v2M466.5 424v2M466.5 461v1M466.5 469v1M466.5 478v1M467.5 70v1M467.5 121v1M467.5 134v1M467.5 138v1M467.5 175v1M467.5 423v1M467.5 460v1M467.5 470v1M467.5 477v1M467.5 528v1M468.5 71v1M468.5 122v1M468.5 133v1M468.5 139v1M468.5 176v1M468.5 422v1M468.5 459v1M468.5 471v1M468.5 476v1M468.5 527v1M469.5 123v1M469.5 132v1M469.5 140v1M469.5 177v2M469.5 420v2M469.5 458v1M469.5 472v1M469.5 475v1M470.5 124v1M470.5 131v1M470.5 141v1M470.5 179v1M470.5 419v1M470.5 457v1M470.5 474v1M471.5 73v1M471.5 125v1M471.5 130v1M471.5 142v1M471.5 180v2M471.5 417v2M471.5 456v1M471.5 525v1M472.5 74v1M472.5 126v1M472.5 129v1M472.5 143v1M472.5 182v1M472.5 416v1M472.5 455v1M472.5 472v1M472.5 524v1M473.5 75v1M473.5 127v1M473.5 144v1M473.5 183v2M473.5 414v2M473.5 454v1M473.5 471v1M473.5 523v1M474.5 145v1M474.5 185v1M474.5 413v1M474.5 453v1M474.5 470v1M475.5 129v1M475.5 146v2M475.5 186v2M475.5 411v2M475.5 451v2M475.5 469v1M476.5 77v1M476.5 130v1M476.5 148v1M476.5 188v1M476.5 410v1M476.5 450v1M476.5 468v1M476.5 521v1M477.5 78v1M477.5 131v1M477.5 149v1M477.5 189v2M477.5 408v2M477.5 449v1M477.5 451v1M477.5 467v1M477.5 520v1M478.5 79v1M478.5 132v1M478.5 150v1M478.5 191v2M478.5 406v2M478.5 448v1M478.5 452v1M478.5 466v1M478.5 519v1M479.5 133v1M479.5 151v1M479.5 193v1M479.5 405v1M479.5 447v1M479.5 453v1M479.5 465v1M480.5 134v1M480.5 150v1M480.5 152v2M480.5 194v2M480.5 403v2M480.5 445v2M480.5 454v1M480.5 464v1M481.5 81v1M481.5 135v1M481.5 154v1M481.5 196v1M481.5 401v2M481.5 444v1M481.5 463v1M481.5 517v1M482.5 82v1M482.5 136v1M482.5 155v1M482.5 198v2M482.5 399v2M482.5 443v1M482.5 462v1M482.5 516v1M483.5 83v1M483.5 137v2M483.5 148v1M483.5 156v1M483.5 200v2M483.5 397v2M483.5 442v1M483.5 456v1M483.5 460v2M483.5 515v1M484.5 84v1M484.5 139v1M484.5 147v1M484.5 157v2M484.5 202v2M484.5 395v2M484.5 440v2M484.5 457v1M484.5 459v1M484.5 514v1M485.5 140v1M485.5 159v1M485.5 204v1M485.5 439v1M485.5 458v1M486.5 141v1M486.5 160v1M486.5 205v3M486.5 391v3M486.5 438v1M486.5 457v1M487.5 86v1M487.5 142v1M487.5 145v1M487.5 161v2M487.5 208v2M487.5 389v2M487.5 436v2M487.5 456v1M487.5 512v1M488.5 87v1M488.5 143v1M488.5 163v1M488.5 210v2M488.5 387v2M488.5 455v1M488.5 511v1M489.5 88v1M489.5 145v1M489.5 164v2M489.5 212v2M489.5 385v2M489.5 433v2M489.5 453v2M489.5 510v1M490.5 89v1M490.5 146v1M490.5 166v1M490.5 214v2M490.5 383v2M490.5 432v1M490.5 452v1M490.5 509v1M491.5 90v1M491.5 147v1M491.5 192v1M491.5 216v2M491.5 381v2M491.5 431v1M491.5 451v1M491.5 508v1M492.5 91v1M492.5 148v1M492.5 168v2M492.5 218v3M492.5 378v3M492.5 429v2M492.5 437v1M492.5 450v1M492.5 507v1M493.5 92v1M493.5 149v2M493.5 166v1M493.5 170v1M493.5 221v2M493.5 376v2M493.5 428v1M493.5 448v2M493.5 506v1M494.5 93v1M494.5 151v1M494.5 171v2M494.5 223v3M494.5 373v3M494.5 426v2M494.5 447v1M494.5 505v1M495.5 94v1M495.5 152v1M495.5 173v2M495.5 226v3M495.5 370v3M495.5 399v1M495.5 424v2M495.5 439v1M495.5 446v1M495.5 504v1M496.5 95v1M496.5 153v2M496.5 164v1M496.5 175v1M496.5 229v3M496.5 367v3M496.5 423v1M496.5 444v2M496.5 503v1M497.5 96v1M497.5 155v1M497.5 163v1M497.5 176v2M497.5 232v3M497.5 364v3M497.5 421v2M497.5 443v1M497.5 502v1M498.5 97v1M498.5 156v2M498.5 178v1M498.5 235v3M498.5 361v3M498.5 420v1M498.5 441v2M498.5 501v1M499.5 98v1M499.5 158v1M499.5 179v2M499.5 238v3M499.5 358v3M499.5 419v1M499.5 440v1M499.5 500v1M500.5 99v1M500.5 159v1M500.5 181v2M500.5 241v4M500.5 354v4M500.5 416v2M500.5 439v1M500.5 499v1M501.5 100v1M501.5 183v1M501.5 245v3M501.5 351v3M501.5 414v2M501.5 437v2M501.5 498v1M502.5 101v1M502.5 162v1M502.5 185v1M502.5 248v5M502.5 346v5M502.5 413v1M502.5 436v1M502.5 497v1M503.5 102v1M503.5 163v2M503.5 187v1M503.5 253v4M503.5 342v4M503.5 411v2M503.5 434v2M503.5 496v1M504.5 103v1M504.5 165v1M504.5 188v2M504.5 257v5M504.5 337v5M504.5 409v2M504.5 433v1M504.5 495v1M505.5 104v1M505.5 158v1M505.5 166v2M505.5 190v2M505.5 262v6M505.5 331v6M505.5 407v2M505.5 431v2M505.5 494v1M506.5 105v1M506.5 157v1M506.5 168v2M506.5 192v2M506.5 268v8M506.5 323v8M506.5 405v2M506.5 429v2M506.5 493v1M507.5 106v1M507.5 170v1M507.5 194v2M507.5 276v11M507.5 312v11M507.5 403v2M507.5 428v1M507.5 492v1M508.5 107v1M508.5 171v2M508.5 196v2M508.5 287v12M508.5 300v12M508.5 401v2M508.5 426v2M508.5 491v1M509.5 108v1M509.5 155v1M509.5 173v1M509.5 198v2M509.5 400v1M509.5 425v1M509.5 490v1M510.5 109v1M510.5 174v2M510.5 200v2M510.5 397v2M510.5 424v1M510.5 489v1M511.5 110v1M511.5 176v2M511.5 203v1M511.5 395v2M511.5 421v2M511.5 488v1M512.5 111v1M512.5 153v1M512.5 178v1M512.5 204v3M512.5 392v3M512.5 419v2M512.5 487v1M513.5 112v2M513.5 180v1M513.5 207v2M513.5 390v2M513.5 418v1M513.5 485v2M514.5 114v1M514.5 181v2M514.5 209v2M514.5 388v2M514.5 416v2M514.5 484v1M515.5 115v1M515.5 151v1M515.5 183v2M515.5 211v3M515.5 385v3M515.5 414v2M515.5 483v1M516.5 116v1M516.5 150v1M516.5 185v2M516.5 214v2M516.5 383v2M516.5 412v2M516.5 482v1M517.5 117v1M517.5 187v2M517.5 216v3M517.5 380v1M517.5 382v1M517.5 410v2M517.5 481v1M518.5 118v2M518.5 189v2M518.5 219v2M518.5 377v3M518.5 408v2M518.5 479v2M519.5 120v1M519.5 148v1M519.5 191v2M519.5 222v3M519.5 374v3M519.5 406v2M519.5 478v1M520.5 121v1M520.5 193v2M520.5 225v3M520.5 371v3M520.5 477v1M521.5 122v1M521.5 195v2M521.5 228v3M521.5 368v3M521.5 402v2M521.5 476v1M522.5 123v2M522.5 146v1M522.5 197v1M522.5 199v1M522.5 231v3M522.5 365v3M522.5 399v3M522.5 474v2M523.5 125v1M523.5 200v2M523.5 234v4M523.5 362v3M523.5 397v2M523.5 473v1M524.5 126v1M524.5 202v2M524.5 238v3M524.5 358v3M524.5 395v2M524.5 472v1M525.5 127v1M525.5 144v1M525.5 204v2M525.5 242v3M525.5 354v4M525.5 393v2M525.5 471v1M526.5 128v2M526.5 143v1M526.5 206v3M526.5 245v5M526.5 349v5M526.5 390v3M526.5 469v2M527.5 130v1M527.5 209v3M527.5 250v5M527.5 344v5M527.5 387v3M527.5 468v1M528.5 131v1M528.5 212v2M528.5 255v5M528.5 339v2M528.5 342v2M528.5 385v2M528.5 467v1M529.5 132v2M529.5 141v1M529.5 214v3M529.5 260v1M529.5 262v5M529.5 332v7M529.5 382v2M529.5 465v2M530.5 134v1M530.5 217v1M530.5 219v1M530.5 267v7M530.5 325v7M530.5 379v3M530.5 464v1M531.5 135v2M531.5 220v3M531.5 274v7M531.5 282v5M531.5 312v9M531.5 322v3M531.5 376v3M531.5 462v2M532.5 137v1M532.5 223v3M532.5 287v12M532.5 300v1M532.5 302v10M532.5 373v3M532.5 461v1M533.5 138v1M533.5 226v3M533.5 370v3M533.5 459v2M534.5 140v1M534.5 229v3M534.5 367v3M534.5 458v1M535.5 141v2M535.5 232v4M535.5 363v1M535.5 365v2M535.5 456v2M536.5 143v1M536.5 236v2M536.5 239v1M536.5 359v4M536.5 455v1M537.5 144v2M537.5 240v4M537.5 355v4M537.5 453v2M538.5 146v1M538.5 244v5M538.5 350v5M538.5 452v1M539.5 147v2M539.5 249v5M539.5 345v5M539.5 450v2M540.5 149v1M540.5 254v5M540.5 340v3M540.5 344v1M540.5 449v1M541.5 150v2M541.5 260v6M541.5 333v7M541.5 447v2M542.5 152v2M542.5 266v8M542.5 325v8M542.5 445v2M543.5 154v1M543.5 274v6M543.5 281v5M543.5 313v9M543.5 323v2M543.5 444v1M544.5 155v2M544.5 286v13M544.5 300v1M544.5 302v11M544.5 442v2M545.5 157v2M545.5 440v2M546.5 159v2M546.5 438v2M547.5 161v1M547.5 437v1M548.5 162v2M548.5 435v2M549.5 164v2M549.5 433v2M550.5 166v2M550.5 431v2M551.5 168v2M551.5 429v2M552.5 170v2M552.5 427v2M553.5 172v2M553.5 425v2M554.5 174v2M554.5 423v2M555.5 176v2M555.5 422v1M556.5 178v2M556.5 419v2M557.5 180v2M557.5 417v2M558.5 182v2M558.5 415v2M559.5 184v3M559.5 412v3M560.5 187v2M560.5 410v2M561.5 189v2M561.5 408v2M562.5 191v3M562.5 405v3M563.5 194v2M563.5 403v2M564.5 196v3M564.5 400v3M565.5 199v3M565.5 397v3M566.5 202v3M566.5 394v3M567.5 205v2M567.5 392v2M568.5 207v3M568.5 389v3M569.5 210v3M569.5 386v3M570.5 213v4M570.5 382v4M571.5 217v3M571.5 379v3M572.5 220v4M572.5 375v4M573.5 224v3M573.5 372v3M574.5 227v4M574.5 368v4M575.5 231v4M575.5 364v4M576.5 235v5M576.5 359v5M577.5 240v5M577.5 354v5M578.5 245v5M578.5 349v5M579.5 250v6M579.5 343v6M580.5 256v7M580.5 336v7M581.5 263v9M581.5 327v9M582.5 272v5M582.5 278v7M582.5 314v13M583.5 285v14M583.5 300v14"/>
<path stroke="#bfbfbf" d="M0 0.5h760M2 299.5h233M236 299.5h43M281 299.5h2M284 299.5h8M293 299.5h14M308 299.5h66M375 299.5h14M390 299.5h17M408 299.5h189M0 599.5h760M0.5 1v598M295.5 2v38M296.5 40v74M297.5 114v11M297.5 126v5M297.5 132v6M297.5 139v1M297.5 141v1M297.5 143v1M297.5 145v1M297.5 147v1M297.5 149v1M297.5 151v1M297.5 153v1M297.5 155v1M297.5 157v1M297.5 159v1M297.5 161v1M297.5 163v1M297.5 165v23M298.5 188v3M298.5 192v8M298.5 201v61M299.5 262v16M299.5 279v20M299.5 300v37M300.5 337v21M300.5 359v49M300.5 409v2M301.5 411v74M302.5 485v74M303.5 559v38M599.5 1v598M759.5 1v598"/>
<path stroke="#7f7f7f" d="M126 135.5h2M475 137.5h2M123 138.5h2M478 140.5h2M120 141.5h2M483 142.5h2M479 145.5h2M113 146.5h2M117 149.5h2M486 150.5h2M112 151.5h2M107 152.5h2M490 152.5h2M111 155.5h2M486 155.5h2M493 155.5h2M105 156.5h2M489 158.5h2M109 159.5h2M495 159.5h2M300 162.5h2M491 162.5h2M100 163.5h2M96 165.5h2M501 165.5h2M104 166.5h2M99 167.5h2M498 167.5h2M94 169.5h2M102 169.5h2M495 169.5h2M503 169.5h2M97 171.5h2M500 171.5h2M92 172.5h2M100 173.5h2M497 173.5h2M505 173.5h2M95 174.5h2M503 174.5h2M501 175.5h2M98 176.5h2M499 176.5h2M508 176.5h2M506 177.5h2M503 179.5h2M87 180.5h2M501 180.5h2M89 181.5h2M91 182.5h2M93 183.5h2M513 183.5h2M85 184.5h2M95 184.5h2M511 184.5h2M87 185.5h2M509 185.5h2M89 186.5h2M507 186.5h2M83 187.5h2M91 187.5h2M505 187.5h2M515 187.5h2M85 188.5h2M513 188.5h2M87 189.5h2M510 189.5h3M89 190.5h2M508 190.5h2M81 191.5h2M91 191.5h2M506 191.5h2M515 191.5h2M83 192.5h2M513 192.5h2M85 193.5h2M511 193.5h2M87 194.5h2M509 194.5h2M89 195.5h2M517 195.5h2M515 196.5h2M513 197.5h2M77 198.5h2M511 198.5h2M79 199.5h2M81 200.5h2M83 201.5h2M75 202.5h2M85 202.5h2M522 202.5h2M77 203.5h2M520 203.5h2M79 204.5h3M517 204.5h3M82 205.5h2M515 205.5h2M73 206.5h2M84 206.5h2M513 206.5h2M524 206.5h2M75 207.5h2M522 207.5h2M77 208.5h3M519 208.5h3M80 209.5h2M517 209.5h2M72 210.5h2M82 210.5h2M515 210.5h2M525 210.5h2M74 211.5h2M523 211.5h2M76 212.5h3M521 212.5h2M79 213.5h2M519 213.5h2M517 214.5h2M527 214.5h2M525 215.5h2M522 216.5h3M520 217.5h2M69 218.5h2M518 218.5h2M71 219.5h3M74 220.5h4M78 221.5h2M69 223.5h3M526 223.5h4M72 224.5h4M523 224.5h3M76 225.5h2M521 225.5h2M66 226.5h2M531 226.5h2M68 227.5h3M527 227.5h4M71 228.5h4M524 228.5h3M75 229.5h2M522 229.5h2M65 230.5h2M532 230.5h2M67 231.5h3M528 231.5h4M70 232.5h4M525 232.5h3M74 233.5h2M523 233.5h2M530 235.5h4M526 236.5h4M524 237.5h2M64 239.5h4M68 240.5h4M63 243.5h4M532 243.5h4M67 244.5h4M528 244.5h4M62 247.5h4M536 247.5h2M66 248.5h4M530 248.5h6M70 249.5h2M527 249.5h3M60 251.5h3M537 251.5h2M63 252.5h5M531 252.5h6M68 253.5h3M528 253.5h3M537 255.5h3M532 256.5h5M529 257.5h3M58 259.5h3M61 260.5h5M66 261.5h3M58 263.5h2M539 263.5h2M60 264.5h6M533 264.5h6M66 265.5h3M530 265.5h3M57 267.5h3M60 268.5h5M536 268.5h6M65 269.5h3M531 269.5h5M57 272.5h5M537 272.5h5M62 273.5h6M531 273.5h6M537 276.5h6M532 277.5h5M56 280.5h5M61 281.5h6M56 284.5h5M61 285.5h6M532 285.5h11M55 289.5h11M533 289.5h11M55 293.5h11M533 293.5h11M538 297.5h6M533 298.5h5M60 300.5h6M55 301.5h5M55 305.5h11M533 305.5h11M55 309.5h11M533 309.5h11M56 313.5h11M532 313.5h6M538 314.5h5M532 317.5h6M538 318.5h5M61 321.5h6M56 322.5h5M62 325.5h6M531 325.5h6M57 326.5h5M537 326.5h5M62 329.5h6M531 329.5h3M57 330.5h5M534 330.5h5M539 331.5h3M66 333.5h3M530 333.5h3M60 334.5h6M533 334.5h6M58 335.5h2M539 335.5h2M530 337.5h3M533 338.5h5M538 339.5h3M67 341.5h3M62 342.5h5M59 343.5h3M68 345.5h3M528 345.5h3M62 346.5h6M531 346.5h5M60 347.5h2M536 347.5h3M69 349.5h3M527 349.5h2M63 350.5h6M529 350.5h4M61 351.5h2M533 351.5h4M67 354.5h4M528 354.5h4M63 355.5h4M532 355.5h4M527 358.5h4M531 359.5h4M73 361.5h2M420 361.5h2M69 362.5h4M422 362.5h2M65 363.5h4M424 363.5h2M426 364.5h2M74 365.5h2M523 365.5h2M70 366.5h4M525 366.5h3M67 367.5h3M528 367.5h4M65 368.5h2M532 368.5h2M75 369.5h2M522 369.5h2M71 370.5h4M524 370.5h3M68 371.5h3M527 371.5h4M66 372.5h2M531 372.5h2M76 373.5h2M521 373.5h2M72 374.5h4M523 374.5h3M69 375.5h3M526 375.5h4M519 377.5h2M454 378.5h2M521 378.5h3M455 379.5h3M524 379.5h4M79 380.5h2M457 380.5h3M528 380.5h2M77 381.5h2M459 381.5h3M74 382.5h3M72 383.5h2M70 384.5h2M80 384.5h2M78 385.5h2M518 385.5h2M76 386.5h2M520 386.5h3M74 387.5h2M523 387.5h2M72 388.5h2M82 388.5h2M515 388.5h2M525 388.5h2M80 389.5h2M517 389.5h2M77 390.5h3M403 390.5h2M519 390.5h3M75 391.5h2M404 391.5h2M522 391.5h2M73 392.5h2M84 392.5h2M513 392.5h2M524 392.5h2M82 393.5h2M515 393.5h2M79 394.5h3M517 394.5h3M77 395.5h2M520 395.5h2M75 396.5h2M512 396.5h2M522 396.5h2M514 397.5h2M516 398.5h2M87 399.5h2M518 399.5h2M85 400.5h2M520 400.5h2M83 401.5h2M81 402.5h2M79 403.5h2M89 403.5h2M87 404.5h2M509 404.5h2M85 405.5h2M511 405.5h2M83 406.5h2M513 406.5h2M81 407.5h2M91 407.5h2M515 407.5h2M89 408.5h2M507 408.5h2M86 409.5h3M509 409.5h2M84 410.5h2M511 410.5h2M82 411.5h2M91 411.5h2M505 411.5h2M513 411.5h2M89 412.5h2M507 412.5h2M87 413.5h2M509 413.5h2M85 414.5h2M511 414.5h2M229 415.5h2M503 415.5h2M513 415.5h2M505 416.5h2M228 417.5h2M507 417.5h2M96 418.5h2M227 418.5h2M509 418.5h2M94 419.5h2M227 419.5h2M226 420.5h2M91 421.5h2M89 422.5h2M98 422.5h2M499 422.5h2M96 423.5h2M94 424.5h2M502 424.5h2M92 425.5h2M100 425.5h2M497 425.5h2M505 426.5h2M97 427.5h2M500 427.5h2M94 429.5h2M102 429.5h2M495 429.5h2M503 429.5h2M99 431.5h2M498 431.5h2M96 433.5h2M494 433.5h2M501 433.5h2M106 436.5h2M498 436.5h2M102 439.5h2M109 439.5h2M489 440.5h2M105 442.5h2M111 443.5h2M486 443.5h2M493 443.5h2M107 446.5h2M490 446.5h2M112 447.5h2M486 448.5h2M209 449.5h2M481 450.5h2M208 451.5h2M119 452.5h2M485 453.5h2M115 455.5h2M120 457.5h2M478 458.5h2M123 460.5h2M475 461.5h2M472 464.5h2M61.5 246v1M62.5 242v1M62.5 356v1M63.5 238v1M64.5 364v1M68.5 222v1M68.5 376v1M71.5 245v1M71.5 353v1M72.5 241v1M81.5 214v1M84.5 183v1M84.5 415v1M91.5 171v1M91.5 426v1M93.5 168v1M93.5 188v1M93.5 410v1M93.5 420v1M93.5 430v1M94.5 173v1M96.5 170v1M96.5 428v1M97.5 175v1M98.5 161v1M98.5 166v1M98.5 432v1M99.5 162v1M99.5 172v1M99.5 426v1M100.5 177v1M100.5 421v1M101.5 168v1M101.5 430v1M101.5 440v1M102.5 164v1M102.5 174v1M102.5 424v1M103.5 154v1M103.5 165v1M103.5 444v1M104.5 155v1M104.5 170v1M104.5 428v1M104.5 438v1M104.5 443v1M105.5 437v1M106.5 151v1M106.5 167v1M106.5 447v1M107.5 157v1M107.5 441v1M108.5 147v1M108.5 158v1M108.5 435v1M108.5 440v1M108.5 451v1M109.5 148v1M109.5 153v1M109.5 445v1M109.5 450v1M110.5 149v1M110.5 154v1M110.5 444v1M110.5 449v1M111.5 144v1M111.5 150v1M111.5 160v1M111.5 438v1M111.5 448v1M112.5 145v1M113.5 156v1M113.5 205v1M113.5 442v1M113.5 457v1M114.5 152v1M114.5 446v1M114.5 456v1M115.5 147v1M115.5 153v1M115.5 206v1M115.5 445v1M116.5 137v1M116.5 148v1M116.5 154v1M116.5 444v1M116.5 461v1M117.5 138v1M117.5 207v1M117.5 400v1M117.5 454v1M117.5 460v1M118.5 139v1M118.5 453v1M118.5 459v1M119.5 134v1M119.5 140v1M119.5 150v1M119.5 208v1M119.5 399v1M119.5 458v1M119.5 464v1M120.5 135v1M120.5 463v1M121.5 136v1M121.5 209v1M121.5 398v1M121.5 451v1M121.5 462v1M122.5 131v1M122.5 137v1M122.5 142v1M122.5 456v1M122.5 461v1M122.5 467v1M123.5 132v1M123.5 143v1M123.5 210v1M123.5 397v1M123.5 455v1M123.5 466v1M124.5 133v1M124.5 144v1M124.5 454v1M124.5 465v1M125.5 128v1M125.5 134v1M125.5 139v1M125.5 211v1M125.5 396v1M125.5 459v1M125.5 464v1M126.5 129v1M126.5 140v1M126.5 458v1M126.5 463v1M127.5 130v1M127.5 141v1M127.5 212v1M127.5 395v1M127.5 457v1M127.5 462v1M128.5 131v1M128.5 136v1M128.5 461v1M128.5 473v1M129.5 132v1M129.5 137v1M129.5 213v1M129.5 394v1M129.5 460v1M129.5 472v1M130.5 133v1M130.5 138v1M130.5 471v1M131.5 122v1M131.5 134v1M131.5 214v1M131.5 393v1M131.5 470v1M131.5 476v1M132.5 123v1M132.5 135v1M132.5 469v1M132.5 475v1M133.5 124v1M133.5 215v1M133.5 392v1M133.5 468v1M133.5 474v1M134.5 119v1M134.5 125v1M134.5 467v1M134.5 472v2M134.5 479v1M135.5 120v1M135.5 126v1M135.5 216v1M135.5 390v1M135.5 466v1M135.5 471v1M135.5 478v1M136.5 121v1M136.5 127v1M136.5 470v1M136.5 477v1M137.5 116v1M137.5 122v1M137.5 128v1M137.5 217v1M137.5 389v1M137.5 469v1M137.5 475v2M137.5 482v1M138.5 117v1M138.5 123v2M138.5 129v1M138.5 468v1M138.5 474v1M138.5 481v1M139.5 118v1M139.5 125v1M139.5 218v1M139.5 388v1M139.5 473v1M139.5 480v1M140.5 119v1M140.5 126v1M140.5 472v1M140.5 478v2M141.5 113v1M141.5 120v2M141.5 127v1M141.5 219v1M141.5 387v1M141.5 471v1M141.5 477v1M142.5 114v1M142.5 122v1M142.5 476v1M143.5 115v2M143.5 123v1M143.5 220v1M143.5 386v1M143.5 475v1M144.5 117v1M144.5 124v1M144.5 474v1M144.5 487v1M145.5 118v1M145.5 221v1M145.5 385v1M145.5 485v2M146.5 119v2M146.5 484v1M147.5 108v1M147.5 121v1M147.5 222v1M147.5 384v1M147.5 483v1M147.5 490v1M148.5 109v1M148.5 481v2M148.5 489v1M149.5 110v1M149.5 223v1M149.5 383v1M149.5 480v1M149.5 488v1M150.5 111v1M150.5 479v1M150.5 486v2M151.5 106v1M151.5 112v2M151.5 224v1M151.5 381v1M151.5 485v1M151.5 492v1M152.5 107v2M152.5 114v1M152.5 484v1M152.5 490v2M153.5 109v1M153.5 115v1M153.5 225v1M153.5 380v1M153.5 483v1M153.5 489v1M154.5 103v1M154.5 110v1M154.5 116v1M154.5 482v1M154.5 488v1M154.5 495v1M155.5 104v1M155.5 111v2M155.5 226v1M155.5 379v1M155.5 486v2M155.5 493v2M156.5 105v2M156.5 113v1M156.5 485v1M156.5 492v1M157.5 107v1M157.5 227v1M157.5 378v1M157.5 491v1M158.5 101v1M158.5 108v1M158.5 489v2M159.5 102v2M159.5 109v2M159.5 228v1M159.5 377v1M159.5 488v1M160.5 104v1M160.5 111v1M160.5 487v1M161.5 105v1M161.5 229v1M161.5 376v1M161.5 500v1M162.5 106v2M162.5 498v2M163.5 108v1M163.5 230v1M163.5 375v1M163.5 497v1M164.5 496v1M165.5 96v2M165.5 231v1M165.5 374v1M165.5 494v2M165.5 501v2M166.5 98v1M166.5 493v1M166.5 500v1M167.5 99v2M167.5 232v1M167.5 373v1M167.5 492v1M167.5 498v2M168.5 93v1M168.5 101v1M168.5 497v1M168.5 505v1M169.5 94v2M169.5 102v2M169.5 233v1M169.5 371v1M169.5 495v2M169.5 503v2M170.5 96v1M170.5 104v1M170.5 494v1M170.5 502v1M171.5 97v2M171.5 234v1M171.5 370v1M171.5 500v2M171.5 507v1M172.5 91v1M172.5 99v1M172.5 499v1M172.5 505v2M173.5 92v2M173.5 100v2M173.5 235v1M173.5 369v1M173.5 497v2M173.5 504v1M174.5 94v2M174.5 102v1M174.5 496v1M174.5 502v2M175.5 96v2M175.5 236v1M175.5 368v1M175.5 501v1M176.5 89v2M176.5 98v2M176.5 499v2M177.5 91v2M177.5 100v1M177.5 237v1M177.5 367v1M177.5 498v1M178.5 93v1M179.5 94v2M179.5 238v1M179.5 366v1M179.5 511v1M180.5 96v2M180.5 509v2M181.5 239v1M181.5 365v1M181.5 507v2M182.5 505v2M183.5 84v1M183.5 240v1M183.5 364v1M183.5 503v2M183.5 513v2M184.5 85v2M184.5 502v1M184.5 511v2M185.5 87v2M185.5 241v1M185.5 363v1M185.5 509v2M186.5 89v2M186.5 507v2M186.5 515v1M187.5 82v2M187.5 91v2M187.5 123v1M187.5 242v1M187.5 361v1M187.5 505v2M187.5 513v2M188.5 84v2M188.5 93v1M188.5 125v1M188.5 511v2M189.5 86v3M189.5 127v1M189.5 243v1M189.5 360v1M189.5 509v2M190.5 89v2M190.5 129v1M190.5 507v2M190.5 517v1M191.5 81v2M191.5 91v2M191.5 244v1M191.5 359v1M191.5 506v1M191.5 515v2M192.5 83v2M192.5 131v1M192.5 479v1M192.5 513v2M193.5 85v2M193.5 133v1M193.5 245v1M193.5 358v1M193.5 477v1M193.5 511v2M194.5 87v2M194.5 135v1M194.5 475v1M194.5 509v2M195.5 79v2M195.5 89v2M195.5 246v1M195.5 357v1M195.5 508v1M196.5 81v2M196.5 137v1M196.5 473v1M197.5 83v2M197.5 247v1M197.5 356v1M197.5 471v1M198.5 85v2M198.5 141v1M198.5 469v1M198.5 520v2M199.5 87v2M199.5 143v1M199.5 248v1M199.5 355v1M199.5 518v2M200.5 465v1M200.5 516v2M201.5 145v1M201.5 249v1M201.5 354v1M201.5 514v2M202.5 75v2M202.5 147v1M202.5 463v1M202.5 512v2M202.5 522v2M203.5 77v2M203.5 149v1M203.5 250v1M203.5 353v1M203.5 461v1M203.5 520v2M204.5 79v3M204.5 459v1M204.5 517v3M205.5 82v2M205.5 151v1M205.5 251v1M205.5 351v1M205.5 457v1M205.5 515v2M206.5 73v2M206.5 84v2M206.5 153v1M206.5 454v2M206.5 513v2M206.5 524v2M207.5 75v2M207.5 155v1M207.5 252v1M207.5 350v1M207.5 452v2M207.5 522v2M208.5 77v3M208.5 157v1M208.5 519v3M209.5 80v2M209.5 253v1M209.5 349v1M209.5 450v1M209.5 517v2M210.5 72v2M210.5 82v2M210.5 159v1M210.5 448v1M210.5 515v2M210.5 525v2M211.5 74v2M211.5 161v1M211.5 254v1M211.5 348v1M211.5 447v1M211.5 523v2M212.5 76v2M212.5 163v1M212.5 445v1M212.5 520v3M213.5 78v2M213.5 255v1M213.5 347v1M213.5 518v2M214.5 70v2M214.5 80v2M214.5 517v1M215.5 72v2M215.5 167v1M215.5 256v1M215.5 346v1M215.5 441v1M216.5 74v3M216.5 169v1M216.5 439v1M217.5 77v2M217.5 171v1M217.5 257v1M217.5 345v1M218.5 79v2M218.5 435v2M218.5 528v2M219.5 173v1M219.5 258v1M219.5 344v1M219.5 524v4M220.5 175v1M220.5 432v1M220.5 521v3M221.5 177v1M221.5 259v1M221.5 342v1M221.5 430v2M221.5 519v2M222.5 68v1M222.5 179v1M222.5 428v2M222.5 530v1M223.5 69v3M223.5 260v1M223.5 341v1M223.5 426v2M223.5 526v4M224.5 72v4M224.5 181v1M224.5 424v2M224.5 523v3M225.5 76v2M225.5 183v1M225.5 261v1M225.5 340v1M225.5 422v2M225.5 521v2M226.5 66v2M226.5 185v1M226.5 421v1M226.5 531v2M227.5 68v3M227.5 187v1M227.5 262v1M227.5 339v1M227.5 527v4M228.5 71v4M228.5 524v3M229.5 75v2M229.5 189v1M229.5 263v1M229.5 338v1M229.5 416v1M229.5 522v2M230.5 65v2M230.5 191v1M230.5 414v1M230.5 532v2M231.5 67v3M231.5 193v1M231.5 264v1M231.5 337v1M231.5 413v1M231.5 528v4M232.5 70v4M232.5 411v1M232.5 525v3M233.5 74v2M233.5 195v1M233.5 265v1M233.5 336v1M233.5 523v2M234.5 64v1M234.5 409v1M235.5 65v4M235.5 199v1M235.5 407v1M236.5 69v4M236.5 201v1M236.5 405v1M237.5 73v2M237.5 268v1M237.5 334v1M237.5 403v1M238.5 203v1M238.5 535v1M239.5 205v1M239.5 269v1M239.5 332v1M239.5 531v4M240.5 207v1M240.5 399v1M240.5 527v4M241.5 270v1M241.5 331v1M241.5 397v1M241.5 526v1M242.5 62v1M242.5 209v1M242.5 395v1M242.5 536v1M243.5 63v4M243.5 211v1M243.5 271v1M243.5 330v1M243.5 393v1M243.5 532v4M244.5 67v4M244.5 213v1M244.5 391v1M244.5 528v4M245.5 71v1M245.5 215v1M245.5 272v1M245.5 329v1M245.5 389v1M245.5 527v1M246.5 537v1M247.5 61v2M247.5 217v1M247.5 273v1M247.5 328v1M247.5 387v1M247.5 533v4M248.5 63v6M248.5 219v1M248.5 385v1M248.5 529v4M249.5 69v3M249.5 221v1M249.5 274v1M249.5 327v1M249.5 383v1M249.5 527v2M250.5 223v1M250.5 381v1M251.5 60v2M251.5 275v1M251.5 326v1M251.5 379v1M251.5 536v3M252.5 62v6M252.5 225v1M252.5 531v5M253.5 68v3M253.5 227v1M253.5 276v1M253.5 325v1M253.5 377v1M253.5 528v3M254.5 229v1M254.5 375v1M255.5 59v3M255.5 277v1M255.5 324v1M255.5 373v1M256.5 62v5M256.5 231v1M256.5 371v1M257.5 67v3M257.5 233v1M257.5 278v1M257.5 322v1M257.5 369v1M258.5 235v1M259.5 237v1M259.5 279v1M259.5 321v1M259.5 367v1M259.5 538v3M260.5 365v1M260.5 533v5M261.5 239v1M261.5 280v1M261.5 320v1M261.5 363v1M261.5 530v3M262.5 241v1M262.5 361v1M263.5 58v2M263.5 243v1M263.5 281v1M263.5 319v1M263.5 359v1M263.5 539v2M264.5 60v6M264.5 533v6M265.5 66v3M265.5 245v1M265.5 282v1M265.5 318v1M265.5 357v1M265.5 530v3M266.5 247v1M266.5 355v1M267.5 249v1M267.5 283v1M267.5 317v1M267.5 353v1M267.5 539v3M268.5 57v5M268.5 251v1M268.5 351v1M268.5 534v5M269.5 62v6M269.5 284v1M269.5 316v1M269.5 349v1M269.5 531v3M270.5 253v1M270.5 347v1M271.5 255v1M271.5 285v1M271.5 315v1M272.5 57v5M272.5 257v1M272.5 345v1M272.5 537v5M273.5 62v6M273.5 259v1M273.5 286v1M273.5 313v1M273.5 343v1M273.5 531v6M274.5 341v1M275.5 261v1M275.5 287v1M275.5 312v1M275.5 339v1M276.5 56v5M276.5 263v1M276.5 337v1M277.5 61v6M277.5 265v1M277.5 288v1M277.5 311v1M278.5 335v1M279.5 267v1M279.5 289v1M279.5 310v1M279.5 333v1M280.5 269v1M280.5 331v1M280.5 538v5M281.5 271v1M281.5 290v1M281.5 309v1M281.5 329v1M281.5 532v6M282.5 273v1M282.5 327v1M283.5 291v1M283.5 308v1M284.5 275v1M284.5 325v1M284.5 538v5M285.5 56v11M285.5 277v1M285.5 292v1M285.5 307v1M285.5 323v1M285.5 532v6M286.5 279v1M286.5 321v1M287.5 293v1M287.5 306v1M287.5 319v1M288.5 281v1M288.5 317v1M289.5 55v11M289.5 283v1M289.5 294v1M289.5 315v1M289.5 533v11M290.5 285v1M291.5 287v1M291.5 295v1M291.5 303v1M291.5 313v1M292.5 311v1M293.5 55v11M293.5 289v1M293.5 302v1M293.5 309v1M293.5 533v11M294.5 291v1M294.5 307v1M295.5 297v1M295.5 301v1M295.5 305v1M296.5 295v1M297.5 55v5M297.5 298v1M297.5 300v1M297.5 303v1M298.5 60v6M298.5 297v1M298.5 301v1M300.5 125v1M300.5 138v1M300.5 140v1M300.5 142v1M300.5 144v1M300.5 146v1M300.5 148v1M300.5 150v1M300.5 152v1M300.5 154v1M300.5 156v1M300.5 158v1M300.5 160v1M300.5 163v2M300.5 297v1M300.5 301v1M300.5 533v5M301.5 123v2M301.5 161v1M301.5 295v1M301.5 298v1M301.5 300v1M301.5 538v6M302.5 122v1M302.5 159v2M302.5 303v1M303.5 121v1M303.5 157v2M303.5 293v1M303.5 297v1M303.5 301v1M303.5 305v1M304.5 119v2M304.5 155v2M304.5 307v1M305.5 55v11M305.5 118v1M305.5 289v1M305.5 296v1M305.5 302v1M305.5 309v1M305.5 533v11M306.5 287v1M307.5 285v1M307.5 295v1M307.5 303v1M307.5 311v1M308.5 313v1M309.5 55v11M309.5 283v1M309.5 293v1M309.5 304v1M309.5 315v1M309.5 533v11M310.5 281v1M310.5 317v1M311.5 279v1M311.5 292v1M311.5 305v1M312.5 277v1M312.5 319v1M313.5 61v6M313.5 275v1M313.5 291v1M313.5 306v1M313.5 321v1M313.5 532v11M314.5 56v5M314.5 273v1M314.5 323v1M315.5 290v1M315.5 307v1M316.5 271v1M316.5 325v1M317.5 61v6M317.5 269v1M317.5 289v1M317.5 308v1M318.5 56v5M318.5 267v1M318.5 329v1M319.5 265v1M319.5 309v1M320.5 263v1M321.5 310v1M321.5 333v1M321.5 532v5M322.5 261v1M322.5 335v1M322.5 537v6M323.5 259v1M323.5 286v1M323.5 311v1M323.5 337v1M324.5 257v1M325.5 62v6M325.5 255v1M325.5 285v1M325.5 312v1M325.5 339v1M325.5 531v6M326.5 57v5M326.5 253v1M326.5 341v1M326.5 537v5M327.5 283v1M327.5 313v1M327.5 343v1M328.5 251v1M328.5 345v1M329.5 65v3M329.5 249v1M329.5 282v1M329.5 314v1M329.5 531v5M330.5 60v5M330.5 247v1M330.5 347v1M330.5 536v6M331.5 57v3M331.5 245v1M331.5 281v1M331.5 315v1M331.5 349v1M332.5 243v1M332.5 351v1M333.5 66v3M333.5 241v1M333.5 280v1M333.5 316v1M333.5 353v1M333.5 530v3M334.5 60v6M334.5 533v6M335.5 58v2M335.5 239v1M335.5 279v1M335.5 317v1M335.5 355v1M335.5 539v2M336.5 237v1M336.5 357v1M337.5 66v3M337.5 235v1M337.5 278v1M337.5 318v1M337.5 359v1M338.5 61v5M338.5 233v1M339.5 58v3M339.5 231v1M339.5 277v1M339.5 319v1M339.5 361v1M340.5 363v1M341.5 229v1M341.5 276v1M341.5 320v1M341.5 365v1M341.5 529v3M342.5 227v1M342.5 367v1M342.5 532v5M343.5 225v1M343.5 274v1M343.5 321v1M343.5 537v3M344.5 369v1M345.5 68v3M345.5 221v1M345.5 273v1M345.5 322v1M345.5 371v1M345.5 528v3M346.5 63v5M346.5 373v1M346.5 531v6M347.5 60v3M347.5 219v1M347.5 272v1M347.5 323v1M347.5 537v2M348.5 217v1M348.5 375v1M349.5 70v2M349.5 215v1M349.5 271v1M349.5 324v1M349.5 377v1M349.5 527v3M350.5 66v4M350.5 213v1M350.5 379v1M350.5 530v6M351.5 62v4M351.5 211v1M351.5 270v1M351.5 325v1M351.5 381v1M351.5 536v2M352.5 61v1M352.5 209v1M352.5 422v2M353.5 71v1M353.5 269v1M353.5 326v1M353.5 383v1M353.5 424v2M353.5 527v1M354.5 67v4M354.5 207v1M354.5 385v1M354.5 426v2M354.5 528v4M355.5 63v4M355.5 205v1M355.5 327v1M355.5 387v1M355.5 428v2M355.5 532v4M356.5 62v1M356.5 389v1M356.5 430v2M356.5 536v1M357.5 72v1M357.5 201v1M357.5 267v1M357.5 328v1M357.5 432v1M358.5 68v4M358.5 199v1M358.5 391v1M358.5 434v1M358.5 436v1M359.5 64v4M359.5 266v1M359.5 329v1M359.5 393v1M359.5 438v1M360.5 63v1M360.5 197v1M360.5 395v1M360.5 440v1M361.5 195v1M361.5 264v1M361.5 330v1M361.5 524v2M362.5 193v1M362.5 397v1M362.5 444v1M362.5 526v4M363.5 191v1M363.5 263v1M363.5 332v1M363.5 399v1M363.5 530v4M364.5 189v1M364.5 401v1M364.5 534v1M365.5 74v2M365.5 262v1M365.5 333v1M365.5 403v1M365.5 523v2M366.5 70v4M366.5 187v1M366.5 525v3M367.5 67v3M367.5 185v1M367.5 261v1M367.5 334v1M367.5 405v1M367.5 528v4M368.5 65v2M368.5 183v1M368.5 407v1M368.5 458v2M368.5 532v2M369.5 75v2M369.5 181v1M369.5 260v1M369.5 335v1M369.5 409v1M369.5 460v2M369.5 522v2M370.5 71v4M370.5 179v1M370.5 462v2M370.5 524v3M371.5 68v3M371.5 259v1M371.5 336v1M371.5 411v1M371.5 464v2M371.5 527v4M372.5 66v2M372.5 177v1M372.5 413v1M372.5 531v2M373.5 76v2M373.5 175v1M373.5 258v1M373.5 337v1M373.5 415v1M373.5 521v2M374.5 72v4M374.5 173v1M374.5 417v1M374.5 523v3M375.5 69v3M375.5 171v1M375.5 338v1M375.5 526v4M376.5 68v1M376.5 169v1M376.5 419v1M376.5 530v1M377.5 78v2M377.5 167v1M377.5 256v1M377.5 339v1M377.5 421v1M378.5 74v4M378.5 423v1M379.5 71v3M379.5 165v1M379.5 254v1M379.5 340v1M379.5 425v1M380.5 69v2M380.5 163v1M380.5 518v2M381.5 161v1M381.5 253v1M381.5 341v1M381.5 427v1M381.5 520v2M382.5 159v1M382.5 429v1M382.5 522v3M383.5 157v1M383.5 252v1M383.5 342v1M383.5 431v1M383.5 525v2M384.5 81v1M384.5 517v2M384.5 527v2M385.5 79v2M385.5 155v1M385.5 251v1M385.5 343v1M385.5 433v1M385.5 519v2M386.5 76v3M386.5 153v1M386.5 435v1M386.5 521v2M387.5 74v2M387.5 151v1M387.5 250v1M387.5 344v1M387.5 437v1M387.5 523v2M388.5 72v2M388.5 82v2M388.5 149v1M388.5 439v1M388.5 515v2M388.5 525v2M389.5 80v2M389.5 147v1M389.5 249v1M389.5 345v1M389.5 517v2M390.5 77v3M390.5 441v1M390.5 519v3M391.5 75v2M391.5 145v1M391.5 346v1M391.5 443v1M391.5 522v2M392.5 73v2M392.5 84v2M392.5 143v1M392.5 445v1M392.5 513v2M392.5 524v2M393.5 82v2M393.5 141v1M393.5 247v1M393.5 347v1M393.5 447v1M393.5 515v2M394.5 79v3M394.5 139v1M394.5 517v3M395.5 77v2M395.5 137v1M395.5 245v1M395.5 348v1M395.5 449v1M395.5 520v2M396.5 75v2M396.5 85v2M396.5 135v1M396.5 451v1M396.5 522v2M397.5 83v2M397.5 244v1M397.5 453v1M398.5 81v2M398.5 133v1M399.5 79v2M399.5 131v1M399.5 243v1M399.5 350v1M399.5 455v1M399.5 510v1M400.5 77v2M400.5 129v1M400.5 387v1M400.5 457v1M400.5 511v2M401.5 127v1M401.5 242v1M401.5 351v1M401.5 388v1M401.5 459v1M401.5 513v2M402.5 125v1M402.5 389v1M402.5 461v1M402.5 515v2M403.5 89v2M403.5 241v1M403.5 352v1M403.5 508v1M403.5 517v2M404.5 87v2M404.5 123v1M404.5 463v1M404.5 509v2M404.5 519v1M405.5 85v2M405.5 121v1M405.5 240v1M405.5 353v1M405.5 465v1M405.5 511v2M406.5 83v2M406.5 119v1M406.5 392v1M406.5 467v1M406.5 513v2M407.5 81v2M407.5 91v2M407.5 239v1M407.5 393v1M407.5 506v2M407.5 515v2M408.5 89v2M408.5 394v1M408.5 469v1M408.5 508v2M408.5 517v1M409.5 87v2M409.5 238v1M409.5 355v1M409.5 471v1M409.5 510v3M410.5 85v2M410.5 93v1M410.5 396v1M410.5 473v1M410.5 513v2M411.5 83v2M411.5 91v2M411.5 237v1M411.5 356v1M411.5 475v1M411.5 505v2M411.5 515v2M412.5 89v2M412.5 507v2M413.5 87v2M413.5 235v1M413.5 357v1M413.5 509v2M414.5 85v2M414.5 95v2M414.5 400v1M414.5 511v2M415.5 84v1M415.5 93v2M415.5 234v1M415.5 358v1M415.5 513v2M416.5 91v2M417.5 89v2M417.5 233v1M417.5 359v1M418.5 87v2M418.5 403v1M418.5 501v2M419.5 232v1M419.5 360v1M419.5 503v2M420.5 405v1M420.5 505v1M421.5 100v1M421.5 231v1M421.5 498v1M421.5 506v2M422.5 98v2M422.5 499v2M422.5 508v2M423.5 97v1M423.5 230v1M423.5 501v2M424.5 95v2M424.5 102v1M424.5 496v1M424.5 503v2M425.5 94v1M425.5 100v2M425.5 229v1M425.5 497v2M425.5 505v2M426.5 92v2M426.5 99v1M426.5 499v1M426.5 507v1M427.5 91v1M427.5 97v2M427.5 228v1M427.5 500v2M428.5 96v1M428.5 104v1M428.5 494v1M428.5 502v1M429.5 94v2M429.5 102v2M429.5 227v1M429.5 365v1M429.5 495v2M429.5 503v2M430.5 93v1M430.5 101v1M430.5 413v1M430.5 497v1M430.5 505v1M431.5 99v2M431.5 106v1M431.5 225v1M431.5 366v1M431.5 414v1M431.5 498v2M432.5 98v1M432.5 104v2M432.5 415v1M432.5 500v1M433.5 96v2M433.5 103v1M433.5 224v1M433.5 367v1M433.5 416v1M433.5 501v2M434.5 102v1M434.5 417v1M435.5 100v2M435.5 223v1M435.5 368v1M435.5 418v1M435.5 490v1M436.5 99v1M436.5 491v2M437.5 98v1M437.5 222v1M437.5 369v1M437.5 493v1M438.5 111v1M438.5 487v1M438.5 494v1M439.5 109v2M439.5 221v1M439.5 370v1M439.5 488v1M439.5 495v2M440.5 108v1M440.5 489v2M440.5 497v1M441.5 107v1M441.5 220v1M441.5 371v1M441.5 491v1M442.5 105v2M442.5 113v1M442.5 485v1M442.5 492v1M443.5 104v1M443.5 111v2M443.5 219v1M443.5 372v1M443.5 486v2M443.5 493v2M444.5 103v1M444.5 110v1M444.5 116v1M444.5 482v1M444.5 488v1M444.5 495v1M445.5 109v1M445.5 115v1M445.5 218v1M445.5 373v1M445.5 483v1M445.5 489v1M446.5 107v2M446.5 114v1M446.5 484v1M446.5 490v2M447.5 106v1M447.5 112v2M447.5 217v1M447.5 374v1M447.5 485v1M447.5 492v1M448.5 111v1M448.5 119v1M448.5 486v2M449.5 110v1M449.5 117v2M449.5 215v1M449.5 375v1M449.5 488v1M450.5 109v1M450.5 116v1M450.5 489v1M451.5 108v1M451.5 115v1M451.5 214v1M451.5 376v1M451.5 477v1M451.5 490v1M452.5 113v2M452.5 478v1M453.5 112v1M453.5 213v1M453.5 377v1M453.5 479v2M454.5 111v1M454.5 124v1M454.5 474v1M454.5 481v1M455.5 123v1M455.5 212v1M455.5 475v1M455.5 482v1M456.5 122v1M456.5 476v1M456.5 483v2M457.5 120v2M457.5 127v1M457.5 211v1M457.5 471v1M457.5 477v1M457.5 485v1M458.5 119v1M458.5 126v1M458.5 472v1M458.5 478v2M459.5 118v1M459.5 125v1M459.5 210v1M459.5 473v1M459.5 480v1M460.5 117v1M460.5 123v2M460.5 130v1M460.5 469v1M460.5 474v1M460.5 481v1M461.5 116v1M461.5 122v1M461.5 129v1M461.5 209v1M461.5 470v1M461.5 475v2M461.5 482v1M462.5 121v1M462.5 128v1M462.5 471v1M462.5 477v1M463.5 120v1M463.5 126v2M463.5 132v1M463.5 208v1M463.5 382v1M463.5 472v1M463.5 478v1M464.5 119v1M464.5 125v1M464.5 131v1M464.5 473v1M464.5 479v1M465.5 124v1M465.5 130v1M465.5 206v1M465.5 383v1M465.5 474v1M466.5 123v1M466.5 129v1M466.5 463v1M466.5 475v1M467.5 122v1M467.5 128v1M467.5 205v1M467.5 384v1M467.5 464v1M467.5 476v1M468.5 127v1M468.5 460v1M468.5 465v1M469.5 126v1M469.5 138v1M469.5 204v1M469.5 385v1M469.5 461v1M469.5 466v1M470.5 125v1M470.5 137v1M470.5 462v1M470.5 467v1M471.5 136v1M471.5 141v1M471.5 203v1M471.5 386v1M471.5 457v1M471.5 463v1M471.5 468v1M472.5 135v1M472.5 140v1M472.5 458v1M472.5 469v1M473.5 134v1M473.5 139v1M473.5 202v1M473.5 387v1M473.5 459v1M473.5 470v1M474.5 133v1M474.5 138v1M474.5 144v1M474.5 454v1M474.5 460v1M474.5 465v1M475.5 132v1M475.5 143v1M475.5 201v1M475.5 388v1M475.5 455v1M475.5 466v1M476.5 131v1M476.5 142v1M476.5 456v1M476.5 467v1M477.5 136v1M477.5 141v1M477.5 147v1M477.5 200v1M477.5 389v1M477.5 457v1M477.5 462v1M478.5 135v1M478.5 146v1M478.5 463v1M479.5 134v1M479.5 199v1M479.5 390v1M479.5 448v1M479.5 464v1M480.5 139v1M480.5 449v1M480.5 459v1M481.5 138v1M481.5 144v1M481.5 198v1M481.5 391v1M481.5 460v1M482.5 137v1M482.5 143v1M482.5 154v1M482.5 444v1M482.5 461v1M483.5 153v1M483.5 392v1M483.5 445v1M483.5 451v1M484.5 152v1M484.5 446v1M484.5 452v1M485.5 141v1M485.5 151v1M485.5 156v1M485.5 393v1M485.5 442v1M485.5 447v1M487.5 160v1M487.5 438v1M487.5 454v1M488.5 149v1M488.5 154v1M488.5 159v1M488.5 439v1M488.5 444v1M488.5 449v1M489.5 148v1M489.5 153v1M489.5 445v1M489.5 450v1M490.5 147v1M490.5 163v1M490.5 451v1M491.5 157v1M491.5 441v1M492.5 151v1M492.5 156v1M492.5 431v1M492.5 442v1M492.5 447v1M493.5 161v1M493.5 432v1M494.5 160v1M494.5 170v1M494.5 428v1M495.5 154v1M495.5 444v1M496.5 174v1M496.5 424v1M496.5 434v1M497.5 158v1M497.5 168v1M497.5 430v1M497.5 435v1M498.5 177v1M498.5 421v1M499.5 172v1M499.5 426v1M500.5 166v1M500.5 432v1M500.5 437v1M501.5 423v1M502.5 170v1M502.5 414v1M502.5 428v1M504.5 425v1M505.5 168v1M505.5 178v1M505.5 430v1M506.5 407v1M507.5 172v1M507.5 427v1M508.5 195v1M508.5 403v1M510.5 199v1M511.5 419v1M515.5 412v1M517.5 190v1M517.5 384v1M517.5 408v1M519.5 194v1M526.5 357v1M527.5 245v1M527.5 353v1M530.5 222v1M530.5 376v1M534.5 234v1M535.5 360v1M536.5 242v1M536.5 356v1M537.5 352v1"/>
<path stroke="#ff0000" d="M209 41.5h5M284 97.5h5M282 98.5h2M289 98.5h2M747 108.5h3M744 111.5h4M749 111.5h4M282 112.5h2M289 112.5h2M284 113.5h5M744 113.5h9M198 126.5h6M202 127.5h2M190 132.5h5M195 133.5h2M286 136.5h5M284 137.5h2M291 137.5h2M190 142.5h5M745 147.5h2M748 147.5h2M747 148.5h2M750 148.5h2M284 151.5h2M291 151.5h2M286 152.5h5M745 152.5h2M748 152.5h2M747 153.5h2M750 153.5h2M219 159.5h6M223 160.5h2M211 165.5h5M216 166.5h2M211 175.5h5M265 183.5h2M267 184.5h2M269 185.5h2M271 186.5h2M273 187.5h2M746 187.5h6M275 188.5h2M277 189.5h2M279 190.5h2M281 191.5h2M283 192.5h2M285 193.5h2M746 193.5h2M749 193.5h3M286 194.5h3M288 195.5h3M290 196.5h3M292 197.5h3M294 198.5h2M296 199.5h2M298 200.5h2M300 201.5h2M302 202.5h2M304 203.5h2M306 204.5h2M308 205.5h2M309 206.5h3M311 207.5h3M313 208.5h3M315 209.5h3M317 210.5h2M319 211.5h3M321 212.5h3M323 213.5h2M325 214.5h2M327 215.5h2M329 216.5h2M330 217.5h3M332 218.5h3M334 219.5h3M336 220.5h3M338 221.5h3M340 222.5h3M342 223.5h3M344 224.5h3M346 225.5h3M348 226.5h3M350 227.5h3M351 228.5h4M353 229.5h3M355 230.5h3M357 231.5h3M359 232.5h3M361 233.5h3M363 234.5h3M365 235.5h3M367 236.5h3M747 236.5h3M368 237.5h4M745 237.5h2M750 237.5h2M371 238.5h3M372 239.5h4M374 240.5h4M376 241.5h4M378 242.5h4M380 243.5h4M745 243.5h2M750 243.5h2M382 244.5h3M747 244.5h3M384 245.5h3M386 246.5h3M388 247.5h3M390 248.5h3M392 249.5h3M394 250.5h3M395 251.5h4M397 252.5h4M399 253.5h4M401 254.5h4M403 255.5h4M405 256.5h4M407 257.5h4M409 258.5h4M411 259.5h4M413 260.5h2M409 273.5h2M750 276.5h3M751 277.5h2M746 279.5h2M405 282.5h2M746 284.5h2M745 287.5h2M401 291.5h2M745 293.5h8M397 300.5h2M392 309.5h3M392 312.5h2M389 318.5h2M385 327.5h2M143 330.5h2M105 339.5h2M554 339.5h3M564 339.5h3M142 342.5h15M104 351.5h15M131 493.5h5M134 494.5h2M104.5 350v1M105.5 348v2M106.5 346v2M107.5 340v1M107.5 344v2M108.5 341v3M114.5 339v12M114.5 352v2M115.5 338v1M116.5 337v1M119.5 509v1M120.5 508v1M121.5 499v1M121.5 507v1M122.5 500v1M122.5 506v1M123.5 501v1M123.5 505v1M124.5 502v1M124.5 504v1M125.5 503v1M126.5 502v1M126.5 504v1M127.5 501v1M127.5 505v1M128.5 500v1M128.5 506v1M129.5 499v1M129.5 507v1M130.5 498v1M131.5 497v1M132.5 496v1M133.5 495v1M135.5 495v3M136.5 338v1M142.5 341v1M143.5 339v2M144.5 337v2M145.5 331v1M145.5 335v2M146.5 332v3M152.5 330v12M152.5 343v2M153.5 329v1M154.5 328v1M174.5 329v1M181.5 326v1M182.5 324v1M183.5 322v1M185.5 320v1M186.5 318v1M187.5 135v5M187.5 316v1M188.5 134v1M188.5 140v1M188.5 314v1M189.5 133v1M189.5 141v1M189.5 312v1M190.5 310v1M192.5 308v1M193.5 306v1M194.5 304v1M195.5 141v1M195.5 302v1M196.5 134v1M196.5 140v1M196.5 300v1M197.5 132v1M197.5 135v5M197.5 298v1M198.5 131v1M198.5 296v1M199.5 130v1M200.5 129v1M200.5 294v1M201.5 128v1M201.5 292v1M202.5 290v1M203.5 53v1M203.5 128v4M203.5 288v1M204.5 54v1M204.5 286v1M205.5 45v5M205.5 55v1M205.5 284v1M206.5 44v1M206.5 50v1M206.5 54v1M206.5 282v1M207.5 43v1M207.5 51v3M208.5 42v1M208.5 168v5M208.5 280v1M209.5 167v1M209.5 173v1M209.5 278v1M210.5 157v1M210.5 166v1M210.5 174v1M210.5 276v1M211.5 274v1M212.5 272v1M213.5 270v1M214.5 42v1M215.5 43v1M215.5 51v3M215.5 268v1M216.5 44v1M216.5 50v1M216.5 54v1M216.5 174v1M216.5 266v1M217.5 45v5M217.5 55v1M217.5 167v1M217.5 173v1M217.5 264v1M218.5 56v1M218.5 165v1M218.5 168v5M218.5 262v1M219.5 57v1M219.5 164v1M219.5 260v1M220.5 163v1M220.5 258v1M221.5 162v1M221.5 256v1M222.5 161v1M223.5 254v1M224.5 161v4M224.5 252v1M225.5 250v1M226.5 248v1M227.5 246v1M228.5 244v1M229.5 242v1M231.5 190v1M231.5 240v1M232.5 238v1M233.5 236v1M234.5 234v1M235.5 232v1M236.5 230v1M238.5 228v1M239.5 226v1M240.5 224v1M241.5 222v1M242.5 220v1M243.5 218v1M244.5 216v1M246.5 214v1M247.5 212v1M248.5 210v1M249.5 208v1M250.5 206v1M251.5 204v1M252.5 202v1M254.5 200v1M255.5 198v1M256.5 196v1M258.5 192v1M259.5 190v1M261.5 188v1M262.5 186v1M263.5 184v1M264.5 182v1M278.5 103v5M279.5 101v2M279.5 108v2M280.5 100v1M280.5 110v1M280.5 142v5M281.5 99v1M281.5 111v1M281.5 140v2M281.5 147v2M282.5 139v1M282.5 149v1M283.5 138v1M283.5 150v1M286.5 105v1M288.5 144v1M291.5 99v1M291.5 111v1M292.5 100v1M292.5 110v1M293.5 101v2M293.5 108v2M293.5 138v1M293.5 150v1M294.5 103v5M294.5 139v1M294.5 149v1M295.5 140v2M295.5 147v2M296.5 142v5M297.5 131v1M298.5 170v1M348.5 411v1M349.5 408v1M351.5 189v1M351.5 405v1M352.5 190v3M352.5 402v1M353.5 193v3M353.5 399v1M354.5 196v3M355.5 199v3M355.5 396v1M356.5 202v3M356.5 393v1M357.5 205v3M357.5 390v1M358.5 208v2M359.5 210v3M359.5 387v1M360.5 213v3M360.5 384v1M361.5 216v3M361.5 381v1M362.5 219v3M363.5 222v3M363.5 378v1M364.5 225v3M364.5 375v1M365.5 228v3M365.5 372v1M366.5 231v3M367.5 234v1M367.5 369v1M368.5 238v2M368.5 366v1M369.5 240v3M369.5 363v1M370.5 243v3M371.5 246v3M371.5 360v1M372.5 249v2M372.5 357v1M373.5 251v3M373.5 354v1M374.5 254v3M375.5 257v3M375.5 351v1M376.5 260v3M376.5 348v1M377.5 263v3M377.5 345v1M378.5 266v3M379.5 269v2M379.5 342v1M380.5 272v3M380.5 339v1M381.5 275v3M381.5 336v1M382.5 278v3M383.5 281v3M383.5 333v1M384.5 284v3M384.5 330v1M385.5 287v3M386.5 290v3M387.5 293v2M387.5 324v1M388.5 295v3M388.5 321v1M389.5 298v3M390.5 301v3M391.5 304v3M391.5 315v1M392.5 307v2M393.5 310v2M394.5 313v3M395.5 306v1M395.5 316v3M396.5 303v1M396.5 319v3M397.5 322v3M398.5 325v3M399.5 297v1M399.5 328v3M400.5 294v1M400.5 331v2M401.5 334v2M402.5 336v3M403.5 288v1M403.5 339v3M404.5 285v1M404.5 342v3M405.5 345v3M406.5 348v3M407.5 279v1M407.5 351v3M408.5 276v1M408.5 354v2M411.5 270v1M412.5 267v1M413.5 264v1M552.5 341v3M553.5 340v1M553.5 344v1M554.5 345v1M557.5 340v1M558.5 341v3M559.5 344v4M560.5 348v8M561.5 344v4M562.5 341v3M563.5 340v1M566.5 345v1M567.5 340v1M567.5 344v1M568.5 341v3M744.5 149v1M744.5 154v1M744.5 239v3M744.5 281v2M745.5 148v1M745.5 153v1M745.5 186v1M745.5 194v1M745.5 238v1M745.5 242v1M745.5 280v1M745.5 283v1M745.5 292v1M746.5 109v2M746.5 146v1M746.5 151v1M746.5 290v2M747.5 149v1M747.5 154v1M747.5 188v5M747.5 288v2M748.5 240v1M748.5 280v1M748.5 283v1M749.5 146v1M749.5 151v1M749.5 279v1M749.5 281v2M750.5 109v2M750.5 149v1M750.5 154v1M750.5 188v5M750.5 278v1M750.5 287v6M750.5 294v1M751.5 147v1M751.5 152v1M751.5 238v1M751.5 242v1M751.5 286v1M752.5 146v1M752.5 151v1M752.5 186v1M752.5 194v1M752.5 239v3M752.5 278v1"/>
<path stroke="#00ff00" d="M467 91.5h11M304 98.5h5M467 103.5h11M304 106.5h5M302 110.5h9M380 115.5h5M380 123.5h5M750 126.5h3M378 127.5h9M751 127.5h2M303 137.5h5M303 145.5h5M301 149.5h9M364 150.5h5M364 158.5h5M362 162.5h9M745 166.5h2M750 166.5h2M747 206.5h3M36 247.5h5M30 253.5h7M40 253.5h7M30 257.5h17M747 257.5h3M747 261.5h3M746 263.5h5M747 266.5h3M747 270.5h3M746 272.5h5M746 309.5h5M747 312.5h3M183 329.5h2M189 330.5h2M192 331.5h2M195 332.5h2M201 333.5h2M204 334.5h2M207 335.5h2M213 336.5h2M216 337.5h2M219 338.5h2M225 339.5h2M228 340.5h2M231 341.5h2M234 341.5h2M237 342.5h2M240 343.5h2M243 344.5h2M249 345.5h2M252 346.5h2M258 347.5h2M261 348.5h2M264 349.5h2M270 350.5h2M273 351.5h2M276 352.5h2M282 353.5h2M285 354.5h2M288 355.5h2M294 356.5h2M297 357.5h2M300 358.5h2M306 359.5h2M309 360.5h2M312 361.5h2M318 362.5h2M321 363.5h2M327 364.5h2M330 365.5h2M333 366.5h2M339 367.5h2M342 368.5h2M345 369.5h2M351 370.5h2M354 371.5h2M357 372.5h2M363 373.5h2M366 374.5h2M369 375.5h2M375 376.5h2M378 377.5h2M381 378.5h2M387 379.5h2M412 399.5h9M415 405.5h3M415 409.5h3M442 425.5h9M445 431.5h3M445 435.5h3M382 542.5h2M388 542.5h2M385 546.5h2M391 546.5h2M382 552.5h2M388 552.5h2M385 556.5h2M391 556.5h2M34.5 249v3M35.5 248v1M35.5 252v1M41.5 248v1M41.5 252v1M42.5 249v3M186.5 329v1M187.5 330v1M198.5 332v1M199.5 333v1M210.5 335v1M211.5 336v1M222.5 338v1M223.5 339v1M234.5 196v38M234.5 235v13M235.5 248v64M235.5 313v28M235.5 342v10M236.5 352v52M246.5 344v1M247.5 345v1M255.5 346v1M256.5 347v1M267.5 349v1M268.5 350v1M279.5 352v1M280.5 353v1M291.5 355v1M292.5 356v1M299.5 177v2M300.5 131v1M300.5 170v1M300.5 179v2M301.5 135v1M301.5 139v5M301.5 181v1M302.5 96v1M302.5 100v5M302.5 136v1M302.5 138v1M302.5 144v1M302.5 182v2M303.5 97v1M303.5 99v1M303.5 105v1M303.5 184v1M303.5 358v1M304.5 185v2M304.5 359v1M305.5 146v3M305.5 150v2M305.5 187v2M306.5 107v3M306.5 111v2M306.5 189v1M307.5 190v1M308.5 136v1M308.5 138v1M308.5 144v1M308.5 192v2M309.5 97v1M309.5 99v1M309.5 105v1M309.5 135v1M309.5 139v5M309.5 194v1M310.5 96v1M310.5 100v5M310.5 195v2M311.5 197v1M312.5 198v2M313.5 200v2M314.5 202v1M315.5 203v2M315.5 361v1M316.5 205v2M316.5 362v1M317.5 207v1M318.5 208v2M319.5 210v1M320.5 212v1M321.5 213v2M322.5 215v1M323.5 216v2M324.5 218v2M324.5 363v1M325.5 220v1M325.5 364v1M326.5 221v2M327.5 223v2M328.5 225v1M329.5 226v2M330.5 228v1M331.5 229v2M332.5 231v2M333.5 233v1M334.5 234v2M335.5 236v2M336.5 238v1M336.5 366v1M337.5 239v2M337.5 367v1M338.5 241v1M339.5 242v2M340.5 244v2M341.5 246v1M342.5 247v2M343.5 249v2M344.5 251v1M345.5 252v2M346.5 254v1M347.5 255v2M348.5 257v2M348.5 369v1M349.5 259v1M349.5 370v1M350.5 260v2M351.5 262v2M352.5 264v1M353.5 265v2M354.5 183v1M354.5 267v1M355.5 268v2M356.5 270v2M357.5 272v1M358.5 273v2M359.5 275v2M360.5 277v1M360.5 372v1M361.5 278v2M361.5 373v1M362.5 152v5M362.5 280v1M363.5 151v1M363.5 157v1M363.5 281v2M364.5 283v2M365.5 285v1M366.5 159v3M366.5 163v4M366.5 286v2M367.5 288v2M368.5 290v1M369.5 151v1M369.5 157v1M369.5 291v2M370.5 152v5M370.5 293v1M371.5 148v1M371.5 294v2M372.5 296v2M372.5 375v1M373.5 298v1M373.5 376v1M374.5 299v2M375.5 301v2M376.5 303v1M377.5 304v2M378.5 117v5M378.5 306v1M379.5 116v1M379.5 122v1M379.5 307v2M379.5 547v1M379.5 557v1M380.5 309v2M380.5 545v2M380.5 555v2M381.5 311v1M381.5 544v1M381.5 554v1M382.5 124v3M382.5 128v4M382.5 312v2M382.5 543v1M382.5 553v1M383.5 314v2M383.5 541v1M383.5 551v1M384.5 316v1M384.5 378v1M384.5 543v3M384.5 553v3M385.5 116v1M385.5 122v1M385.5 317v2M385.5 379v1M385.5 547v1M385.5 557v1M386.5 117v5M386.5 319v2M386.5 545v1M386.5 555v1M387.5 321v1M387.5 544v1M387.5 554v1M388.5 322v2M388.5 543v1M388.5 553v1M389.5 324v1M389.5 541v1M389.5 551v1M390.5 325v2M390.5 380v1M390.5 543v3M390.5 553v3M391.5 327v2M391.5 547v1M391.5 557v1M392.5 329v1M392.5 545v1M392.5 555v1M393.5 330v2M393.5 544v1M393.5 554v1M394.5 332v2M394.5 542v2M394.5 552v2M395.5 334v1M395.5 541v1M395.5 551v1M396.5 335v2M396.5 383v1M397.5 337v1M398.5 338v2M399.5 340v1M400.5 342v1M401.5 343v2M402.5 345v2M403.5 347v1M404.5 348v2M405.5 350v1M406.5 351v2M407.5 354v1M410.5 393v1M410.5 403v1M411.5 394v1M411.5 402v1M412.5 395v4M412.5 400v2M414.5 406v3M416.5 397v2M416.5 400v5M418.5 406v3M420.5 395v4M420.5 400v2M421.5 394v1M421.5 402v1M422.5 393v1M422.5 403v1M425.5 409v1M440.5 419v1M440.5 429v1M441.5 420v1M441.5 428v1M442.5 421v4M442.5 426v2M444.5 432v3M446.5 423v2M446.5 426v5M448.5 432v3M450.5 421v4M450.5 426v2M451.5 420v1M451.5 428v1M452.5 419v1M452.5 429v1M465.5 89v1M465.5 105v1M466.5 90v1M466.5 104v1M469.5 92v11M475.5 92v11M478.5 90v1M478.5 104v1M479.5 89v1M479.5 105v1M744.5 134v1M744.5 167v2M744.5 212v1M745.5 129v1M745.5 133v1M745.5 169v1M745.5 208v3M745.5 213v1M745.5 306v1M745.5 311v1M746.5 130v1M746.5 132v1M746.5 207v1M746.5 211v2M746.5 256v1M746.5 258v3M746.5 267v3M746.5 307v2M746.5 310v1M747.5 131v1M747.5 167v3M747.5 313v1M748.5 130v1M748.5 132v1M748.5 170v5M748.5 262v1M748.5 264v1M748.5 271v1M748.5 273v2M748.5 308v1M748.5 310v2M748.5 314v1M749.5 129v1M749.5 133v1M749.5 167v3M749.5 313v1M750.5 128v1M750.5 207v1M750.5 211v2M750.5 256v1M750.5 258v3M750.5 267v3M750.5 307v2M750.5 310v1M751.5 169v1M751.5 208v3M751.5 213v1M751.5 306v1M751.5 311v1M752.5 128v1M752.5 167v2M752.5 214v1"/>
<path stroke="#ffff00" d="M237 107.5h9M245 111.5h3M241 113.5h3M102 122.5h2M99 124.5h2M750 124.5h2M248 144.5h9M256 148.5h3M252 150.5h3M744 160.5h9M298 176.5h3M747 197.5h3M745 198.5h2M750 198.5h2M745 200.5h2M750 201.5h2M745 203.5h2M750 203.5h2M747 204.5h3M545 206.5h2M552 206.5h2M547 207.5h5M545 208.5h2M552 208.5h2M545 218.5h2M552 218.5h2M547 219.5h5M745 297.5h5M749 299.5h2M747 300.5h2M255 552.5h3M244 553.5h2M251 553.5h2M255 558.5h3M89.5 119v1M90.5 120v1M91.5 121v13M92.5 120v1M93.5 119v1M94.5 120v1M95.5 121v13M96.5 120v1M97.5 119v1M98.5 120v1M99.5 121v3M99.5 125v7M99.5 135v1M100.5 132v1M100.5 134v1M101.5 123v1M101.5 133v1M102.5 132v1M102.5 134v1M103.5 121v1M103.5 123v9M103.5 135v1M241.5 105v2M241.5 108v5M241.5 114v6M243.5 554v1M244.5 112v1M245.5 552v1M245.5 554v7M246.5 561v1M247.5 117v3M247.5 562v5M248.5 112v1M248.5 116v1M248.5 120v1M248.5 561v1M249.5 113v3M249.5 121v1M249.5 556v5M250.5 555v1M251.5 138v1M251.5 552v1M251.5 554v1M252.5 142v2M252.5 145v5M252.5 151v6M252.5 555v1M253.5 554v1M253.5 556v1M254.5 553v1M254.5 557v1M255.5 149v1M256.5 559v1M257.5 560v1M257.5 568v1M258.5 154v3M258.5 553v1M258.5 557v1M258.5 561v1M258.5 567v1M259.5 149v1M259.5 153v1M259.5 157v1M259.5 554v3M259.5 562v5M260.5 150v3M260.5 158v1M262.5 176v1M351.5 188v1M415.5 260v2M543.5 203v1M543.5 211v5M544.5 204v2M544.5 209v2M544.5 216v2M554.5 204v2M554.5 209v2M554.5 216v2M555.5 203v1M555.5 211v5M744.5 116v1M744.5 156v1M744.5 164v1M744.5 199v1M744.5 201v2M745.5 117v7M745.5 157v1M745.5 163v1M746.5 116v1M746.5 158v2M746.5 161v2M747.5 117v7M747.5 201v2M747.5 296v1M747.5 298v2M747.5 301v3M748.5 116v1M749.5 117v7M749.5 199v2M750.5 158v2M750.5 161v2M750.5 302v2M751.5 157v1M751.5 163v1M751.5 300v2M751.5 304v1M752.5 122v2M752.5 156v1M752.5 164v1M752.5 199v2M752.5 202v1"/>
<path stroke="#0000ff" d="M345 31.5h5M342 32.5h3M351 33.5h3M341 37.5h3M351 39.5h3M341 43.5h3M350 44.5h3M345 45.5h5M750 136.5h2M744 137.5h2M748 137.5h2M750 139.5h2M747 178.5h3M747 184.5h3M749 218.5h3M480 229.5h5M485 230.5h2M443 242.5h5M448 243.5h2M485 244.5h2M480 245.5h5M746 246.5h3M749 247.5h2M749 253.5h2M746 254.5h3M448 257.5h2M443 258.5h5M402 264.5h2M399 265.5h2M381 270.5h2M378 271.5h2M375 272.5h2M360 276.5h2M357 277.5h2M354 278.5h2M351 279.5h2M339 282.5h2M336 283.5h2M333 284.5h2M330 285.5h2M318 288.5h2M315 289.5h2M312 290.5h2M309 291.5h2M306 292.5h2M297 294.5h2M294 295.5h2M291 296.5h3M288 297.5h2M285 298.5h2M279 299.5h2M276 300.5h2M273 301.5h2M270 302.5h2M267 303.5h2M264 304.5h2M258 305.5h2M261 305.5h2M255 306.5h2M252 307.5h2M249 308.5h2M246 309.5h2M243 310.5h2M240 311.5h2M234 312.5h2M231 313.5h2M228 314.5h2M225 315.5h2M222 316.5h2M219 317.5h2M744 317.5h2M747 317.5h3M751 317.5h2M213 318.5h2M210 319.5h2M207 320.5h2M747 320.5h3M204 321.5h2M201 322.5h2M746 322.5h5M198 323.5h2M189 325.5h2M186 326.5h2M183 327.5h2M180 328.5h2M747 330.5h3M746 332.5h5M55 391.5h3M53 395.5h2M218 425.5h3M218 429.5h3M215 432.5h2M222 432.5h2M217 433.5h5M354 436.5h3M359 436.5h5M366 436.5h3M215 437.5h9M357 441.5h2M364 441.5h2M359 442.5h5M357 446.5h9M198 458.5h3M198 462.5h3M195 465.5h2M202 465.5h2M197 466.5h5M195 470.5h9M493 471.5h17M369 472.5h3M374 472.5h5M381 472.5h3M372 477.5h2M379 477.5h2M374 478.5h5M372 482.5h9M41.5 379v1M42.5 380v1M43.5 381v13M44.5 380v1M45.5 379v1M46.5 380v1M47.5 381v13M48.5 380v1M49.5 379v1M50.5 380v1M51.5 381v13M52.5 394v1M55.5 394v1M56.5 390v1M56.5 392v2M192.5 325v1M193.5 324v1M193.5 458v5M194.5 463v2M195.5 324v1M196.5 323v1M197.5 459v3M199.5 467v3M199.5 471v4M201.5 459v3M204.5 463v2M205.5 458v5M213.5 425v5M213.5 443v1M214.5 430v2M216.5 318v1M217.5 317v1M217.5 426v3M219.5 434v3M219.5 438v4M221.5 426v3M224.5 430v2M225.5 425v5M233.5 409v1M236.5 404v1M237.5 312v1M238.5 311v1M238.5 401v1M239.5 398v1M241.5 395v1M242.5 392v1M244.5 389v1M246.5 386v1M247.5 383v1M249.5 380v1M250.5 377v1M252.5 374v1M254.5 371v1M255.5 368v1M257.5 365v1M258.5 362v1M260.5 359v1M262.5 356v1M263.5 353v1M264.5 183v1M265.5 186v1M265.5 350v1M266.5 187v1M266.5 347v1M267.5 190v2M268.5 194v1M268.5 344v1M269.5 195v1M270.5 198v2M270.5 341v1M271.5 202v1M271.5 338v1M272.5 203v1M273.5 206v2M273.5 335v1M274.5 210v1M274.5 332v1M275.5 211v1M276.5 214v2M276.5 329v1M277.5 218v1M278.5 219v1M278.5 326v1M279.5 222v2M279.5 323v1M280.5 226v1M281.5 227v1M281.5 320v1M282.5 230v2M282.5 298v1M282.5 317v1M283.5 234v2M283.5 299v1M284.5 314v1M285.5 238v2M286.5 242v2M286.5 311v1M287.5 246v1M287.5 308v1M288.5 247v1M289.5 250v2M289.5 305v1M290.5 254v1M290.5 302v1M291.5 255v1M292.5 258v2M292.5 299v1M293.5 262v1M294.5 263v1M295.5 266v2M295.5 293v1M296.5 270v1M297.5 271v1M297.5 290v1M298.5 274v2M298.5 287v1M299.5 278v1M300.5 279v1M300.5 284v1M300.5 293v1M301.5 281v3M301.5 294v1M302.5 286v1M303.5 278v1M303.5 287v1M303.5 292v1M304.5 290v2M304.5 293v1M305.5 275v1M305.5 294v2M306.5 272v1M307.5 298v2M308.5 269v1M308.5 302v2M309.5 266v1M309.5 306v1M310.5 307v1M311.5 263v1M311.5 310v2M312.5 314v1M313.5 260v1M313.5 315v1M314.5 257v1M314.5 318v2M315.5 322v1M316.5 254v1M316.5 323v1M317.5 251v1M317.5 326v2M318.5 330v1M319.5 248v1M319.5 331v1M320.5 334v2M321.5 245v1M321.5 287v1M321.5 338v1M322.5 242v1M322.5 288v1M322.5 339v1M323.5 342v2M324.5 239v1M324.5 286v1M324.5 346v1M325.5 236v1M325.5 287v1M325.5 347v1M326.5 350v2M327.5 233v1M327.5 285v1M327.5 354v2M328.5 286v1M329.5 230v1M329.5 358v2M330.5 227v1M330.5 362v2M331.5 366v1M332.5 224v1M332.5 367v1M333.5 221v1M333.5 370v2M334.5 374v1M335.5 218v1M335.5 375v1M336.5 378v2M337.5 215v1M337.5 382v1M338.5 212v1M338.5 383v1M339.5 35v1M339.5 39v3M339.5 386v2M340.5 34v1M340.5 38v1M340.5 42v1M340.5 209v1M340.5 390v1M341.5 33v1M341.5 206v1M341.5 391v1M342.5 281v1M342.5 394v2M343.5 203v1M343.5 282v1M343.5 398v1M344.5 38v1M344.5 42v1M344.5 44v1M344.5 399v1M345.5 39v3M345.5 200v1M345.5 280v1M345.5 402v2M346.5 197v1M346.5 281v1M346.5 406v1M347.5 407v1M348.5 194v1M348.5 279v1M348.5 410v1M349.5 35v3M349.5 191v1M349.5 280v1M350.5 32v1M350.5 34v1M350.5 38v1M350.5 417v1M353.5 43v1M354.5 34v1M354.5 38v1M354.5 42v1M355.5 35v3M355.5 41v1M355.5 434v2M355.5 437v2M356.5 439v2M361.5 434v2M361.5 437v5M361.5 443v3M361.5 447v4M363.5 275v1M364.5 276v1M366.5 274v1M366.5 439v2M366.5 453v1M367.5 275v1M367.5 434v2M367.5 437v2M369.5 273v1M370.5 274v1M370.5 470v2M370.5 473v2M371.5 475v2M372.5 272v1M373.5 273v1M376.5 470v2M376.5 473v5M376.5 479v3M376.5 483v4M381.5 475v2M382.5 470v2M382.5 473v2M384.5 269v1M385.5 270v1M387.5 268v1M388.5 269v1M390.5 267v1M391.5 268v1M393.5 266v1M394.5 267v1M396.5 265v1M397.5 266v1M405.5 263v1M406.5 264v1M408.5 262v1M409.5 263v1M411.5 261v1M412.5 262v1M421.5 258v2M441.5 244v1M441.5 256v1M442.5 243v1M442.5 245v1M442.5 255v1M442.5 257v1M443.5 246v1M443.5 254v1M444.5 247v2M444.5 252v2M445.5 249v3M450.5 244v1M450.5 256v1M451.5 245v1M451.5 255v1M452.5 246v2M452.5 253v2M453.5 248v5M458.5 246v1M478.5 231v1M478.5 243v1M479.5 230v1M479.5 232v1M479.5 242v1M479.5 244v1M480.5 233v1M480.5 241v1M481.5 234v2M481.5 239v2M482.5 236v3M487.5 231v1M487.5 243v1M488.5 232v1M488.5 242v1M489.5 233v2M489.5 240v2M490.5 235v5M493.5 463v1M493.5 479v1M494.5 464v1M494.5 478v1M495.5 465v1M495.5 477v1M496.5 466v2M496.5 475v2M497.5 468v3M497.5 472v3M505.5 468v3M505.5 472v3M506.5 466v2M506.5 475v2M507.5 465v1M507.5 477v1M508.5 464v1M508.5 478v1M509.5 463v1M509.5 479v1M744.5 216v1M745.5 136v1M745.5 138v3M745.5 176v1M745.5 180v3M745.5 217v7M745.5 247v1M745.5 253v1M745.5 316v1M745.5 318v1M745.5 326v3M746.5 141v3M746.5 177v1M746.5 179v1M746.5 183v1M746.5 216v1M746.5 248v1M746.5 252v1M746.5 319v1M746.5 329v1M747.5 138v3M747.5 217v7M747.5 249v3M747.5 327v1M748.5 136v1M748.5 216v1M748.5 316v1M748.5 318v2M748.5 321v1M748.5 323v2M748.5 326v1M748.5 328v1M748.5 331v1M748.5 333v2M749.5 138v1M749.5 217v1M749.5 219v4M749.5 224v1M749.5 327v1M750.5 177v1M750.5 179v1M750.5 183v1M750.5 223v1M750.5 248v1M750.5 252v1M750.5 319v1M750.5 329v1M751.5 140v1M751.5 144v1M751.5 176v1M751.5 180v3M751.5 217v1M751.5 219v4M751.5 224v1M751.5 249v3M751.5 316v1M751.5 318v1M751.5 326v3M752.5 137v2M752.5 141v3"/>
<path stroke="#00ffff" d="M343 188.5h8M326 189.5h17M310 190.5h16M293 191.5h17M276 192.5h7M285 192.5h8M260 193.5h16M243 194.5h17M234 195.5h9M414 263.5h2M413 268.5h2M412 273.5h2M411 278.5h2M410 283.5h2M409 288.5h2M408 293.5h2M407 298.5h2M406 303.5h2M405 308.5h2M404 313.5h2M403 318.5h2M239 404.5h2M242 404.5h2M245 405.5h2M248 405.5h2M251 405.5h2M254 405.5h2M257 405.5h2M260 406.5h2M263 406.5h2M266 406.5h2M269 406.5h2M272 406.5h2M278 407.5h2M281 407.5h2M284 407.5h2M287 407.5h2M290 407.5h2M293 408.5h2M296 408.5h2M299 408.5h2M302 408.5h2M305 408.5h2M308 409.5h2M311 409.5h2M314 409.5h2M317 409.5h2M320 409.5h2M326 410.5h2M329 410.5h2M332 410.5h2M335 410.5h2M338 410.5h2M341 411.5h2M344 411.5h2M237.5 404v1M275.5 406v1M276.5 407v1M323.5 409v1M324.5 410v1M347.5 411v1M391.5 378v3M392.5 373v5M393.5 368v5M394.5 363v5M395.5 358v5M396.5 353v5M397.5 348v5M398.5 343v5M399.5 338v2M399.5 341v2M400.5 333v5M401.5 328v5M402.5 323v5M403.5 319v4M404.5 314v4M405.5 309v4M406.5 304v4M407.5 299v4M408.5 294v4M409.5 289v4M410.5 284v4M411.5 279v4M412.5 274v4M413.5 269v4M414.5 264v4M415.5 262v1"/>
<path stroke="#007f7f" d="M747 336.5h3M745 342.5h2M750 342.5h2M436 362.5h5M432 374.5h3M442 374.5h3M470 379.5h5M466 391.5h3M476 391.5h3M414.5 357v1M430.5 376v1M431.5 375v1M431.5 377v1M432.5 366v5M432.5 378v1M433.5 365v1M433.5 371v1M433.5 377v1M434.5 364v1M434.5 372v2M434.5 375v2M435.5 363v1M441.5 363v1M442.5 364v1M442.5 372v2M442.5 375v2M443.5 365v1M443.5 371v1M443.5 377v1M444.5 366v5M444.5 378v1M445.5 375v1M445.5 377v1M446.5 376v1M448.5 375v1M464.5 393v1M465.5 392v1M465.5 394v1M466.5 383v5M466.5 395v1M467.5 382v1M467.5 388v1M467.5 394v1M468.5 381v1M468.5 389v2M468.5 392v2M469.5 380v1M475.5 380v1M476.5 381v1M476.5 389v2M476.5 392v2M477.5 382v1M477.5 388v1M477.5 394v1M478.5 383v5M478.5 395v1M479.5 392v1M479.5 394v1M480.5 393v1M744.5 343v1M745.5 338v3M745.5 344v1M746.5 337v1M746.5 341v1M746.5 343v1M750.5 337v1M750.5 341v1M750.5 343v1M751.5 338v3M751.5 344v1M752.5 343v1"/>
</g>
<g class="hn">
<text transform="translate(85.5 359) scale(.78 1)" class="c-red">1</text>
<text transform="translate(141.5 458) scale(.78 1)" class="c-yellow">2</text>
<text transform="translate(243.5 518) scale(.78 1)" class="c-green">3</text>
<text transform="translate(363.5 516) scale(.78 1)" class="c-blue">4</text>
<text transform="translate(464.5 453) scale(.78 1)" class="c-red">5</text>
<text transform="translate(516.5 356) scale(.78 1)" class="c-yellow">6</text>
<text transform="translate(515.5 249) scale(.78 1)" class="c-green">7</text>
<text transform="translate(459.5 150) scale(.78 1)" class="c-blue">8</text>
<text transform="translate(357.5 90) scale(.78 1)" class="c-red">9</text>
<text transform="translate(237.5 92) scale(.78 1)" class="c-yellow">10</text>
<text transform="translate(136.5 155) scale(.78 1)" class="c-green">11</text>
<text transform="translate(84.5 252) scale(.78 1)" class="c-blue">12</text>
</g>
<g class="sb">
<text x="605" y="14" class="c-white">Astrolog 5.40</text>
<text x="605" y="24" class="c-lt">Anonymous</text>
<text x="605" y="34" class="c-lt">Wed July 19, 2006</text>
<text x="605" y="44" class="c-lt">12:02pm (ST +8:00 GMT)</text>
<text x="605" y="54" class="c-lt">Taiwan</text>
<text x="605" y="64" class="c-lt">121°00E 25°00N</text>
<text x="605" y="74" class="c-lt">Placidus houses.</text>
<text x="605" y="84" class="c-lt">Tropical, Geocentric.</text>
<text x="605" y="94" class="c-lt">Julian Day = 2453935.6806</text>
<text x="605" y="114" class="c-red"> 1st house:</text>
<text x="677" y="114" class="c-green">25Lib32</text>
<text x="605" y="124" class="c-yellow"> 2nd house:</text>
<text x="677" y="124" class="c-blue">24Sco33</text>
<text x="605" y="134" class="c-green"> 3rd house:</text>
<text x="677" y="134" class="c-red">24Sag54</text>
<text x="605" y="144" class="c-blue"> 4th house:</text>
<text x="677" y="144" class="c-yellow">26Cap18</text>
<text x="605" y="154" class="c-red"> 5th house:</text>
<text x="677" y="154" class="c-green">28Aqu04</text>
<text x="605" y="164" class="c-yellow"> 6th house:</text>
<text x="677" y="164" class="c-blue">28Pis23</text>
<text x="605" y="174" class="c-green"> 7th house:</text>
<text x="677" y="174" class="c-red">25Ari32</text>
<text x="605" y="184" class="c-blue"> 8th house:</text>
<text x="677" y="184" class="c-yellow">24Tau33</text>
<text x="605" y="194" class="c-red"> 9th house:</text>
<text x="677" y="194" class="c-green">24Gem54</text>
<text x="605" y="204" class="c-yellow">10th house:</text>
<text x="677" y="204" class="c-blue">26Can18</text>
<text x="605" y="214" class="c-green">11th house:</text>
<text x="677" y="214" class="c-red">28Leo04</text>
<text x="605" y="224" class="c-blue">12th house:</text>
<text x="677" y="224" class="c-yellow">28Vir23</text>
<text x="605" y="244" class="c-red"> Sun:</text>
<text x="641" y="244" class="c-blue">26Can23</text>
<text x="695" y="244" class="c-lt">- 0°00'</text>
<text x="605" y="254" class="c-blue">Moon:</text>
<text x="641" y="254" class="c-yellow">14Tau03</text>
<text x="695" y="254" class="c-lt">+ 3°42'</text>
<text x="605" y="264" class="c-green">Merc:</text>
<text x="641" y="264" class="c-blue">24Can57</text>
<text x="683" y="264" class="c-white">R</text>
<text x="695" y="264" class="c-lt">- 4°57'</text>
<text x="605" y="274" class="c-green">Venu:</text>
<text x="647" y="274" class="c-blue">0Can05</text>
<text x="695" y="274" class="c-lt">- 0°43'</text>
<text x="605" y="284" class="c-red">Mars:</text>
<text x="641" y="284" class="c-red">27Leo45</text>
<text x="695" y="284" class="c-lt">+ 1°07'</text>
<text x="605" y="294" class="c-red">Jupi:</text>
<text x="647" y="294" class="c-blue">9Sco14</text>
<text x="695" y="294" class="c-lt">+ 1°04'</text>
<text x="605" y="304" class="c-yellow">Satu:</text>
<text x="641" y="304" class="c-red">12Leo21</text>
<text x="695" y="304" class="c-lt">+ 0°47'</text>
<text x="605" y="314" class="c-green">Uran:</text>
<text x="641" y="314" class="c-blue">14Pis23</text>
<text x="683" y="314" class="c-white">R</text>
<text x="695" y="314" class="c-lt">- 0°48'</text>
<text x="605" y="324" class="c-blue">Nept:</text>
<text x="641" y="324" class="c-green">19Aqu01</text>
<text x="683" y="324" class="c-white">R</text>
<text x="695" y="324" class="c-lt">- 0°12'</text>
<text x="605" y="334" class="c-blue">Plut:</text>
<text x="641" y="334" class="c-red">24Sag38</text>
<text x="683" y="334" class="c-white">R</text>
<text x="695" y="334" class="c-lt">+ 7°34'</text>
<text x="605" y="344" class="c-dkcyan">Node:</text>
<text x="641" y="344" class="c-blue">28Pis27</text>
<text x="683" y="344" class="c-white">R</text>
<text x="695" y="344" class="c-lt">+ 0°00'</text>
<text x="605" y="364" class="c-lt">Fire: 3, Earth: 1,</text>
<text x="605" y="374" class="c-lt">Air : 1, Water: 6</text>
<text x="605" y="384" class="c-lt">Car: 3, Fix: 5, Mut: 3</text>
<text x="605" y="394" class="c-lt">Yang: 4, Yin: 7</text>
<text x="605" y="404" class="c-lt">M: 6, N: 5, A: 5, D: 6</text>
<text x="605" y="414" class="c-lt">Ang: 6, Suc: 2, Cad: 3</text>
<text x="605" y="424" class="c-lt">Learn: 6, Share: 5</text>
</g>
</svg>
</body></html>
